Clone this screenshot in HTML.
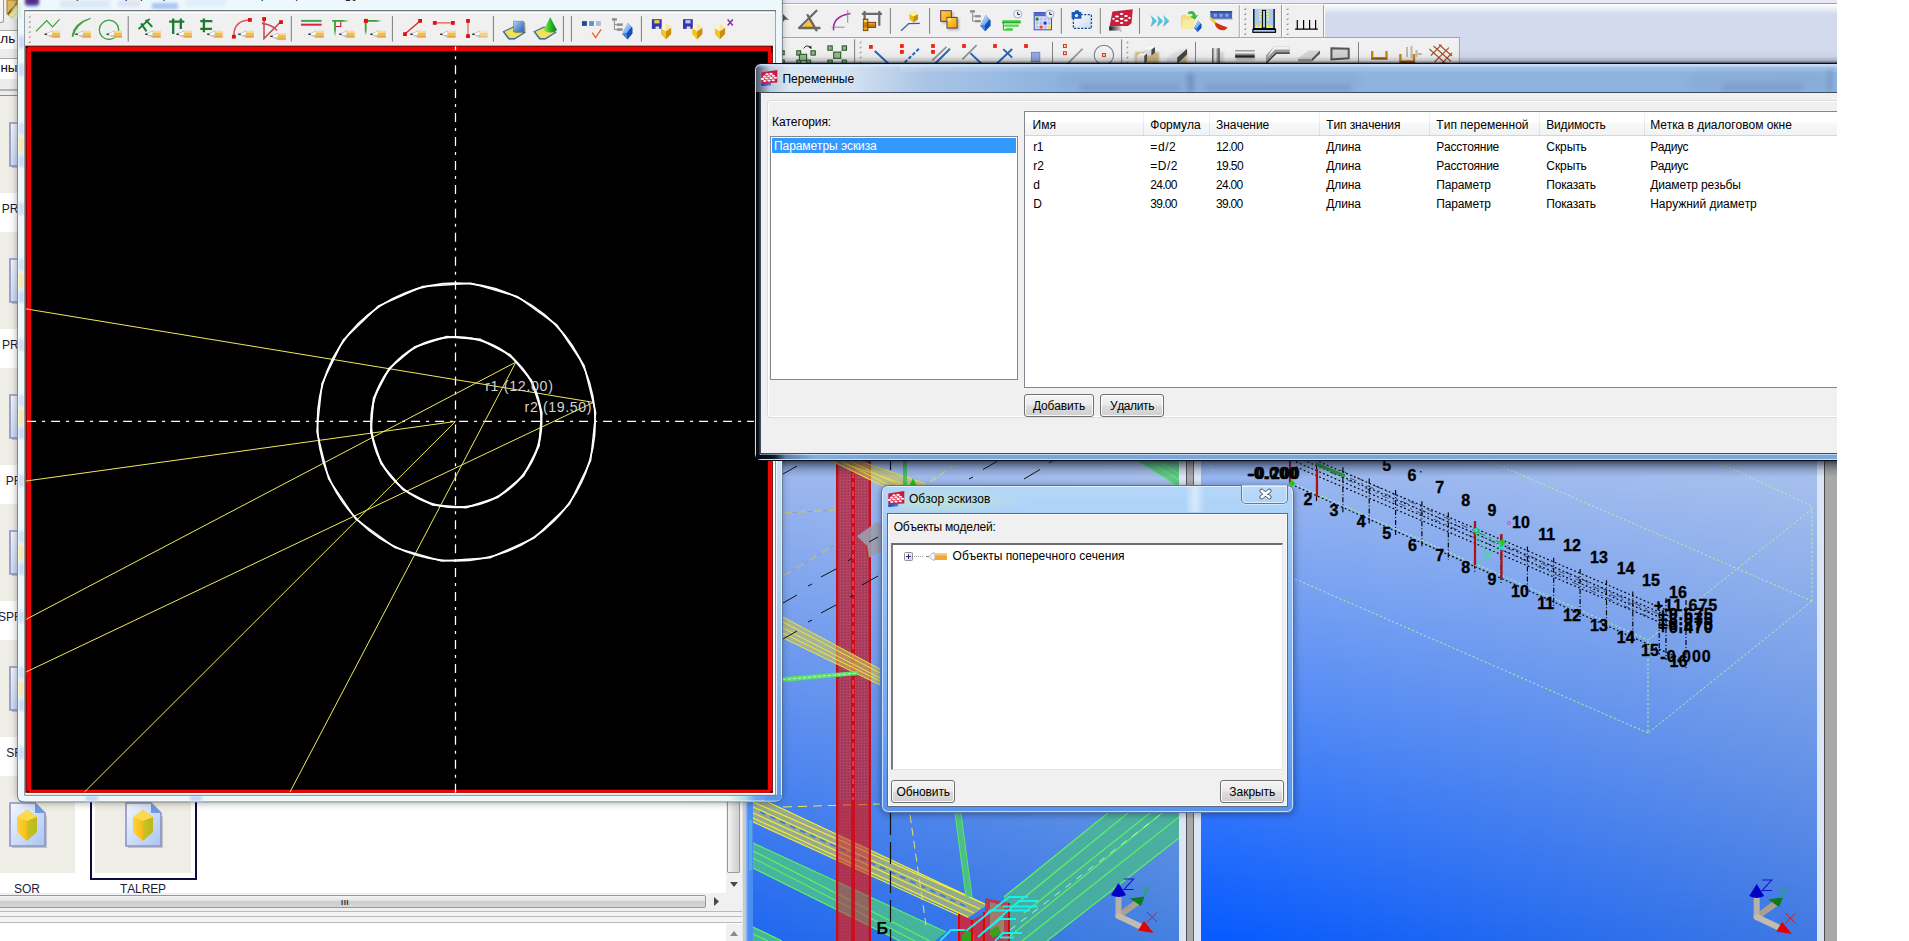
<!DOCTYPE html>
<html lang="ru"><head><meta charset="utf-8"><title>Tekla Structures</title>
<style>
html,body{margin:0;padding:0}
body{width:1909px;height:941px;position:relative;overflow:hidden;background:#fff;font-family:"Liberation Sans",sans-serif;font-size:12px;color:#000}
.a{position:absolute;display:block}
.t{position:absolute;white-space:pre;font-kerning:none;line-height:normal}
#stage{position:absolute;left:0;top:0;width:1837px;height:941px;overflow:hidden;background:#fff}
</style></head>
<body>
<div id="stage">
<div class="a" style="left:0px;top:0px;width:744px;height:941px;background:#fff"></div>
<div class="a" style="left:0px;top:0px;width:744px;height:96px;background:#ececec"></div>
<div class="a" style="left:0px;top:0px;width:3px;height:22px;background:#f6f6f6;border:1px solid #9a9a9a;border-left:none;border-top:none;border-radius:0 0 3px 0"></div>
<svg class="a" style="left:6px;top:0" width="12" height="20" viewBox="0 0 12 20"><path d="M1 0 H11 V12 L6 18 L1 14 Z" fill="#e3b85a" stroke="#a8802c" stroke-width="1"/><path d="M2 14 L11 3" stroke="#6b4c12" stroke-width="1.6"/><path d="M3 16 L11 7 V12 L6 18Z" fill="#f7e3a8"/></svg>
<div class="a" style="left:0px;top:30px;width:744px;height:1px;background:#a8a8a8"></div>
<div class="a" style="left:0px;top:31px;width:744px;height:18px;background:#fff"></div>
<div class="a" style="left:0px;top:58px;width:744px;height:1px;background:#a8a8a8"></div>
<div class="a" style="left:0px;top:59px;width:744px;height:20px;background:#fff"></div>
<div class="a" style="left:0px;top:89px;width:744px;height:2px;background:#b4b4b4"></div>
<div class="a" style="left:0px;top:95px;width:744px;height:1px;background:#8c8c8c"></div>
<span class="t" style="left:-43.0px;top:31.3px;font-size:13.5px;color:#111;">Профиль</span>
<span class="t" style="left:-39.0px;top:59.8px;font-size:13.5px;color:#111;">Основны</span>
<div class="a" style="left:-21px;top:96px;width:96px;height:97px;background:#efeee6"></div>
<div class="a" style="left:95px;top:96px;width:96px;height:97px;background:#efeee6"></div>
<svg class="a" style="left:9px;top:122px" width="40" height="48" viewBox="0 0 40 48">
<defs><linearGradient id="dg9" x1="0" y1="0" x2="1" y2="1"><stop offset="0" stop-color="#f4f8ff"/><stop offset="1" stop-color="#a9c4f2"/></linearGradient>
<linearGradient id="gg9" x1="0" y1="0" x2="1" y2="0"><stop offset="0" stop-color="#ffd23a"/><stop offset=".5" stop-color="#f3bd1c"/><stop offset=".5" stop-color="#c9c322"/><stop offset="1" stop-color="#b9b81e"/></linearGradient></defs>
<path d="M3 5 H27 L38 15 V46 H3 Z" fill="#8c8ca0" opacity=".45"/>
<path d="M1 1 H26 L36 11 V44 H1 Z" fill="url(#dg9)" stroke="#8f93c4" stroke-width="1.6"/>
<path d="M26 1 L36 11 H26 Z" fill="#6d9be6"/>
<path d="M18 8 L28 15 V30 L18 39 L8 30 V15 Z" fill="url(#gg9)"/>
<path d="M18 8 L28 15 L18 19 L8 15 Z" fill="#ffd94d"/>
</svg>
<svg class="a" style="left:125px;top:122px" width="40" height="48" viewBox="0 0 40 48">
<defs><linearGradient id="dg125" x1="0" y1="0" x2="1" y2="1"><stop offset="0" stop-color="#f4f8ff"/><stop offset="1" stop-color="#a9c4f2"/></linearGradient>
<linearGradient id="gg125" x1="0" y1="0" x2="1" y2="0"><stop offset="0" stop-color="#ffd23a"/><stop offset=".5" stop-color="#f3bd1c"/><stop offset=".5" stop-color="#c9c322"/><stop offset="1" stop-color="#b9b81e"/></linearGradient></defs>
<path d="M3 5 H27 L38 15 V46 H3 Z" fill="#8c8ca0" opacity=".45"/>
<path d="M1 1 H26 L36 11 V44 H1 Z" fill="url(#dg125)" stroke="#8f93c4" stroke-width="1.6"/>
<path d="M26 1 L36 11 H26 Z" fill="#6d9be6"/>
<path d="M18 8 L28 15 V30 L18 39 L8 30 V15 Z" fill="url(#gg125)"/>
<path d="M18 8 L28 15 L18 19 L8 15 Z" fill="#ffd94d"/>
</svg>
<div class="a" style="left:-21px;top:232px;width:96px;height:97px;background:#efeee6"></div>
<div class="a" style="left:95px;top:232px;width:96px;height:97px;background:#efeee6"></div>
<svg class="a" style="left:9px;top:258px" width="40" height="48" viewBox="0 0 40 48">
<defs><linearGradient id="dg9" x1="0" y1="0" x2="1" y2="1"><stop offset="0" stop-color="#f4f8ff"/><stop offset="1" stop-color="#a9c4f2"/></linearGradient>
<linearGradient id="gg9" x1="0" y1="0" x2="1" y2="0"><stop offset="0" stop-color="#ffd23a"/><stop offset=".5" stop-color="#f3bd1c"/><stop offset=".5" stop-color="#c9c322"/><stop offset="1" stop-color="#b9b81e"/></linearGradient></defs>
<path d="M3 5 H27 L38 15 V46 H3 Z" fill="#8c8ca0" opacity=".45"/>
<path d="M1 1 H26 L36 11 V44 H1 Z" fill="url(#dg9)" stroke="#8f93c4" stroke-width="1.6"/>
<path d="M26 1 L36 11 H26 Z" fill="#6d9be6"/>
<path d="M18 8 L28 15 V30 L18 39 L8 30 V15 Z" fill="url(#gg9)"/>
<path d="M18 8 L28 15 L18 19 L8 15 Z" fill="#ffd94d"/>
</svg>
<svg class="a" style="left:125px;top:258px" width="40" height="48" viewBox="0 0 40 48">
<defs><linearGradient id="dg125" x1="0" y1="0" x2="1" y2="1"><stop offset="0" stop-color="#f4f8ff"/><stop offset="1" stop-color="#a9c4f2"/></linearGradient>
<linearGradient id="gg125" x1="0" y1="0" x2="1" y2="0"><stop offset="0" stop-color="#ffd23a"/><stop offset=".5" stop-color="#f3bd1c"/><stop offset=".5" stop-color="#c9c322"/><stop offset="1" stop-color="#b9b81e"/></linearGradient></defs>
<path d="M3 5 H27 L38 15 V46 H3 Z" fill="#8c8ca0" opacity=".45"/>
<path d="M1 1 H26 L36 11 V44 H1 Z" fill="url(#dg125)" stroke="#8f93c4" stroke-width="1.6"/>
<path d="M26 1 L36 11 H26 Z" fill="#6d9be6"/>
<path d="M18 8 L28 15 V30 L18 39 L8 30 V15 Z" fill="url(#gg125)"/>
<path d="M18 8 L28 15 L18 19 L8 15 Z" fill="#ffd94d"/>
</svg>
<div class="a" style="left:-21px;top:368px;width:96px;height:97px;background:#efeee6"></div>
<div class="a" style="left:95px;top:368px;width:96px;height:97px;background:#efeee6"></div>
<svg class="a" style="left:9px;top:394px" width="40" height="48" viewBox="0 0 40 48">
<defs><linearGradient id="dg9" x1="0" y1="0" x2="1" y2="1"><stop offset="0" stop-color="#f4f8ff"/><stop offset="1" stop-color="#a9c4f2"/></linearGradient>
<linearGradient id="gg9" x1="0" y1="0" x2="1" y2="0"><stop offset="0" stop-color="#ffd23a"/><stop offset=".5" stop-color="#f3bd1c"/><stop offset=".5" stop-color="#c9c322"/><stop offset="1" stop-color="#b9b81e"/></linearGradient></defs>
<path d="M3 5 H27 L38 15 V46 H3 Z" fill="#8c8ca0" opacity=".45"/>
<path d="M1 1 H26 L36 11 V44 H1 Z" fill="url(#dg9)" stroke="#8f93c4" stroke-width="1.6"/>
<path d="M26 1 L36 11 H26 Z" fill="#6d9be6"/>
<path d="M18 8 L28 15 V30 L18 39 L8 30 V15 Z" fill="url(#gg9)"/>
<path d="M18 8 L28 15 L18 19 L8 15 Z" fill="#ffd94d"/>
</svg>
<svg class="a" style="left:125px;top:394px" width="40" height="48" viewBox="0 0 40 48">
<defs><linearGradient id="dg125" x1="0" y1="0" x2="1" y2="1"><stop offset="0" stop-color="#f4f8ff"/><stop offset="1" stop-color="#a9c4f2"/></linearGradient>
<linearGradient id="gg125" x1="0" y1="0" x2="1" y2="0"><stop offset="0" stop-color="#ffd23a"/><stop offset=".5" stop-color="#f3bd1c"/><stop offset=".5" stop-color="#c9c322"/><stop offset="1" stop-color="#b9b81e"/></linearGradient></defs>
<path d="M3 5 H27 L38 15 V46 H3 Z" fill="#8c8ca0" opacity=".45"/>
<path d="M1 1 H26 L36 11 V44 H1 Z" fill="url(#dg125)" stroke="#8f93c4" stroke-width="1.6"/>
<path d="M26 1 L36 11 H26 Z" fill="#6d9be6"/>
<path d="M18 8 L28 15 V30 L18 39 L8 30 V15 Z" fill="url(#gg125)"/>
<path d="M18 8 L28 15 L18 19 L8 15 Z" fill="#ffd94d"/>
</svg>
<div class="a" style="left:-21px;top:504px;width:96px;height:97px;background:#efeee6"></div>
<div class="a" style="left:95px;top:504px;width:96px;height:97px;background:#efeee6"></div>
<svg class="a" style="left:9px;top:530px" width="40" height="48" viewBox="0 0 40 48">
<defs><linearGradient id="dg9" x1="0" y1="0" x2="1" y2="1"><stop offset="0" stop-color="#f4f8ff"/><stop offset="1" stop-color="#a9c4f2"/></linearGradient>
<linearGradient id="gg9" x1="0" y1="0" x2="1" y2="0"><stop offset="0" stop-color="#ffd23a"/><stop offset=".5" stop-color="#f3bd1c"/><stop offset=".5" stop-color="#c9c322"/><stop offset="1" stop-color="#b9b81e"/></linearGradient></defs>
<path d="M3 5 H27 L38 15 V46 H3 Z" fill="#8c8ca0" opacity=".45"/>
<path d="M1 1 H26 L36 11 V44 H1 Z" fill="url(#dg9)" stroke="#8f93c4" stroke-width="1.6"/>
<path d="M26 1 L36 11 H26 Z" fill="#6d9be6"/>
<path d="M18 8 L28 15 V30 L18 39 L8 30 V15 Z" fill="url(#gg9)"/>
<path d="M18 8 L28 15 L18 19 L8 15 Z" fill="#ffd94d"/>
</svg>
<svg class="a" style="left:125px;top:530px" width="40" height="48" viewBox="0 0 40 48">
<defs><linearGradient id="dg125" x1="0" y1="0" x2="1" y2="1"><stop offset="0" stop-color="#f4f8ff"/><stop offset="1" stop-color="#a9c4f2"/></linearGradient>
<linearGradient id="gg125" x1="0" y1="0" x2="1" y2="0"><stop offset="0" stop-color="#ffd23a"/><stop offset=".5" stop-color="#f3bd1c"/><stop offset=".5" stop-color="#c9c322"/><stop offset="1" stop-color="#b9b81e"/></linearGradient></defs>
<path d="M3 5 H27 L38 15 V46 H3 Z" fill="#8c8ca0" opacity=".45"/>
<path d="M1 1 H26 L36 11 V44 H1 Z" fill="url(#dg125)" stroke="#8f93c4" stroke-width="1.6"/>
<path d="M26 1 L36 11 H26 Z" fill="#6d9be6"/>
<path d="M18 8 L28 15 V30 L18 39 L8 30 V15 Z" fill="url(#gg125)"/>
<path d="M18 8 L28 15 L18 19 L8 15 Z" fill="#ffd94d"/>
</svg>
<div class="a" style="left:-21px;top:640px;width:96px;height:97px;background:#efeee6"></div>
<div class="a" style="left:95px;top:640px;width:96px;height:97px;background:#efeee6"></div>
<svg class="a" style="left:9px;top:666px" width="40" height="48" viewBox="0 0 40 48">
<defs><linearGradient id="dg9" x1="0" y1="0" x2="1" y2="1"><stop offset="0" stop-color="#f4f8ff"/><stop offset="1" stop-color="#a9c4f2"/></linearGradient>
<linearGradient id="gg9" x1="0" y1="0" x2="1" y2="0"><stop offset="0" stop-color="#ffd23a"/><stop offset=".5" stop-color="#f3bd1c"/><stop offset=".5" stop-color="#c9c322"/><stop offset="1" stop-color="#b9b81e"/></linearGradient></defs>
<path d="M3 5 H27 L38 15 V46 H3 Z" fill="#8c8ca0" opacity=".45"/>
<path d="M1 1 H26 L36 11 V44 H1 Z" fill="url(#dg9)" stroke="#8f93c4" stroke-width="1.6"/>
<path d="M26 1 L36 11 H26 Z" fill="#6d9be6"/>
<path d="M18 8 L28 15 V30 L18 39 L8 30 V15 Z" fill="url(#gg9)"/>
<path d="M18 8 L28 15 L18 19 L8 15 Z" fill="#ffd94d"/>
</svg>
<svg class="a" style="left:125px;top:666px" width="40" height="48" viewBox="0 0 40 48">
<defs><linearGradient id="dg125" x1="0" y1="0" x2="1" y2="1"><stop offset="0" stop-color="#f4f8ff"/><stop offset="1" stop-color="#a9c4f2"/></linearGradient>
<linearGradient id="gg125" x1="0" y1="0" x2="1" y2="0"><stop offset="0" stop-color="#ffd23a"/><stop offset=".5" stop-color="#f3bd1c"/><stop offset=".5" stop-color="#c9c322"/><stop offset="1" stop-color="#b9b81e"/></linearGradient></defs>
<path d="M3 5 H27 L38 15 V46 H3 Z" fill="#8c8ca0" opacity=".45"/>
<path d="M1 1 H26 L36 11 V44 H1 Z" fill="url(#dg125)" stroke="#8f93c4" stroke-width="1.6"/>
<path d="M26 1 L36 11 H26 Z" fill="#6d9be6"/>
<path d="M18 8 L28 15 V30 L18 39 L8 30 V15 Z" fill="url(#gg125)"/>
<path d="M18 8 L28 15 L18 19 L8 15 Z" fill="#ffd94d"/>
</svg>
<div class="a" style="left:-21px;top:776px;width:96px;height:97px;background:#efeee6"></div>
<div class="a" style="left:95px;top:776px;width:96px;height:97px;background:#efeee6"></div>
<svg class="a" style="left:9px;top:802px" width="40" height="48" viewBox="0 0 40 48">
<defs><linearGradient id="dg9" x1="0" y1="0" x2="1" y2="1"><stop offset="0" stop-color="#f4f8ff"/><stop offset="1" stop-color="#a9c4f2"/></linearGradient>
<linearGradient id="gg9" x1="0" y1="0" x2="1" y2="0"><stop offset="0" stop-color="#ffd23a"/><stop offset=".5" stop-color="#f3bd1c"/><stop offset=".5" stop-color="#c9c322"/><stop offset="1" stop-color="#b9b81e"/></linearGradient></defs>
<path d="M3 5 H27 L38 15 V46 H3 Z" fill="#8c8ca0" opacity=".45"/>
<path d="M1 1 H26 L36 11 V44 H1 Z" fill="url(#dg9)" stroke="#8f93c4" stroke-width="1.6"/>
<path d="M26 1 L36 11 H26 Z" fill="#6d9be6"/>
<path d="M18 8 L28 15 V30 L18 39 L8 30 V15 Z" fill="url(#gg9)"/>
<path d="M18 8 L28 15 L18 19 L8 15 Z" fill="#ffd94d"/>
</svg>
<svg class="a" style="left:125px;top:802px" width="40" height="48" viewBox="0 0 40 48">
<defs><linearGradient id="dg125" x1="0" y1="0" x2="1" y2="1"><stop offset="0" stop-color="#f4f8ff"/><stop offset="1" stop-color="#a9c4f2"/></linearGradient>
<linearGradient id="gg125" x1="0" y1="0" x2="1" y2="0"><stop offset="0" stop-color="#ffd23a"/><stop offset=".5" stop-color="#f3bd1c"/><stop offset=".5" stop-color="#c9c322"/><stop offset="1" stop-color="#b9b81e"/></linearGradient></defs>
<path d="M3 5 H27 L38 15 V46 H3 Z" fill="#8c8ca0" opacity=".45"/>
<path d="M1 1 H26 L36 11 V44 H1 Z" fill="url(#dg125)" stroke="#8f93c4" stroke-width="1.6"/>
<path d="M26 1 L36 11 H26 Z" fill="#6d9be6"/>
<path d="M18 8 L28 15 V30 L18 39 L8 30 V15 Z" fill="url(#gg125)"/>
<path d="M18 8 L28 15 L18 19 L8 15 Z" fill="#ffd94d"/>
</svg>
<div class="a" style="left:90px;top:769px;width:103px;height:107px;border:2px solid #0c0c3e;background:transparent"></div>
<span class="t" style="left:1.8px;top:201.9px;font-size:12px;color:#1a1a3a;">PROFILE</span>
<span class="t" style="left:1.9px;top:337.9px;font-size:12px;color:#1a1a3a;">PROFIL</span>
<span class="t" style="left:5.8px;top:473.9px;font-size:12px;color:#1a1a3a;">PRFLS</span>
<span class="t" style="left:-2.0px;top:609.9px;font-size:12px;color:#1a1a3a;">SPRFL</span>
<span class="t" style="left:6.2px;top:745.9px;font-size:12px;color:#1a1a3a;">SRFL</span>
<span class="t" style="left:14.0px;top:881.6px;font-size:12px;letter-spacing:-0.005px;color:#1a1a3a;">SQR</span>
<span class="t" style="left:120.0px;top:881.6px;font-size:12px;letter-spacing:-0.115px;color:#1a1a3a;">TALREP</span>
<div class="a" style="left:726px;top:96px;width:16px;height:797px;background:#f0f0f0"></div>
<div class="a" style="left:727px;top:96px;width:13px;height:777px;background:linear-gradient(90deg,#f3f3f3,#dcdcdc 60%,#cfcfcf);border:1px solid #989898;border-top:none;border-radius:0 0 2px 2px;box-sizing:border-box"></div>
<svg class="a" style="left:730px;top:882px" width="8" height="5"><path d="M0 0H8L4 5Z" fill="#4a4a4a"/></svg>
<div class="a" style="left:0px;top:893px;width:744px;height:18px;background:#f0f0f0"></div>
<div class="a" style="left:-4px;top:895px;width:710px;height:13px;background:linear-gradient(#f5f5f5,#e2e2e2 45%,#cdcdcd 50%,#d6d6d6);border:1px solid #989898;border-radius:2px;box-sizing:border-box"></div>
<span class="t" style="left:341.0px;top:897.8px;font-size:8px;letter-spacing:0.443px;color:#333;font-weight:700;">III</span>
<svg class="a" style="left:714px;top:897px" width="5" height="9"><path d="M0 0V9L5 4.5Z" fill="#4a4a4a"/></svg>
<div class="a" style="left:0px;top:911px;width:744px;height:1px;background:#b9b9b9"></div>
<div class="a" style="left:0px;top:912px;width:744px;height:4px;background:#f4f4f4"></div>
<div class="a" style="left:0px;top:916px;width:744px;height:1px;background:#b9b9b9"></div>
<div class="a" style="left:0px;top:917px;width:744px;height:5px;background:#f4f4f4"></div>
<div class="a" style="left:0px;top:922px;width:744px;height:1px;background:#b9b9b9"></div>
<div class="a" style="left:0px;top:923px;width:744px;height:18px;background:#fff"></div>
<div class="a" style="left:726px;top:924px;width:16px;height:17px;background:#f0f0f0"></div>
<svg class="a" style="left:730px;top:931px" width="8" height="5"><path d="M0 5H8L4 0Z" fill="#8a8a8a"/></svg>
<div class="a" style="left:742px;top:0px;width:1px;height:941px;background:#e6e6e6"></div>
<div class="a" style="left:743px;top:0px;width:3px;height:941px;background:#c9c9c9"></div>
<svg class="a" style="left:746px;top:0px" width="1091" height="64" viewBox="746 0 1091 64"><defs>
<linearGradient id="mbcl" x1="0" y1="0" x2="1" y2="1"><stop offset="0" stop-color="#fff"/><stop offset=".6" stop-color="#7db0ee"/><stop offset="1" stop-color="#2a6fd8"/></linearGradient>
<linearGradient id="lavT" x1="0" y1="0" x2="0" y2="1"><stop offset="0" stop-color="#ffffff"/><stop offset="1" stop-color="#d3daee"/></linearGradient>
<linearGradient id="org" x1="0" y1="0" x2="1" y2="1"><stop offset="0" stop-color="#ffd83a"/><stop offset="1" stop-color="#f59a10"/></linearGradient>
<linearGradient id="cylH" x1="0" x2="1"><stop offset="0" stop-color="#4a4a4a"/><stop offset=".4" stop-color="#f4f4f4"/><stop offset="1" stop-color="#3c3c3c"/></linearGradient>
<linearGradient id="cylV" x1="0" x2="0" y1="0" y2="1"><stop offset="0" stop-color="#8a8a8a"/><stop offset=".35" stop-color="#f6f6f6"/><stop offset=".8" stop-color="#2a2a2a"/><stop offset="1" stop-color="#111"/></linearGradient>
<linearGradient id="boxT" x1="0" x2="1" y1="0" y2="1"><stop offset="0" stop-color="#ffffff"/><stop offset="1" stop-color="#c4c4c4"/></linearGradient>
<linearGradient id="tkg" x1="0" x2="1"><stop offset="0" stop-color="#111"/><stop offset="1" stop-color="#d0d0d0"/></linearGradient>
<linearGradient id="snapg" x1="0" x2="1" y1="0" y2="1"><stop offset="0" stop-color="#ffffff"/><stop offset="1" stop-color="#c6d8f2"/></linearGradient>
<filter id="mb1" x="-30%" y="-30%" width="160%" height="160%"><feGaussianBlur stdDeviation="1.2"/></filter>
</defs><rect x="746" y="0" width="1091" height="64" fill="#d3daee"/><rect x="746" y="0" width="1091" height="3.2" fill="#e6e9f4"/><rect x="746" y="3" width="1091" height=".9" fill="#8c8e98"/><rect x="746" y="3.9" width="1091" height="10.5" fill="url(#lavT)"/><rect x="782" y="3.9" width="541.6" height="33.4" fill="#f0f0f0"/><rect x="782" y="3.9" width="541.6" height="1.2" fill="#fafafa"/><rect x="782" y="37.3" width="678" height="1" fill="#8e8e8e"/><rect x="782" y="38.3" width="677.1" height="26" fill="#f0f0f0"/><rect x="782" y="38.3" width="677.1" height="1" fill="#fbfbfb"/><rect x="1458.9" y="38.3" width="1" height="25.700000000000003" fill="#a4a4a4"/><rect x="1238.8" y="5" width="1" height="32.3" fill="#9a9a9a"/><rect x="1239.8" y="5" width="1" height="32.3" fill="#fdfdfd"/><rect x="1281.0" y="5" width="1" height="32.3" fill="#9a9a9a"/><rect x="1282.0" y="5" width="1" height="32.3" fill="#fdfdfd"/><rect x="1323.1" y="5" width="1" height="32.3" fill="#9a9a9a"/><rect x="1324.1" y="5" width="1" height="32.3" fill="#fdfdfd"/><path d="M783 14 L789 20 L785 19.5 L783 22Z" fill="#5a5a5a"/><rect x="889.9" y="8" width="1" height="25.799999999999997" fill="#808080"/><rect x="929.1" y="8" width="1" height="25.799999999999997" fill="#808080"/><rect x="1060.8" y="8" width="1" height="25.799999999999997" fill="#808080"/><rect x="1099.8" y="8" width="1" height="25.799999999999997" fill="#808080"/><rect x="1139.0" y="8" width="1" height="25.799999999999997" fill="#808080"/><path d="M802.3 26.9 L810.7 18.8 L814.9 26.9Z" fill="url(#org)"/><path d="M804.5 26.9 L810.7 21 L813 26.9Z" fill="#ffd23a" opacity=".6"/><path d="M799.1 28 L816.5 10.7 M799.1 28 H819.6 M807.6 15.1 L816.5 30.3" stroke="#6c6862" stroke-width="2.3" fill="none" stroke-linecap="round"/><path d="M833.6 30.3 Q832 16.5 850.3 13.4" fill="none" stroke="#9a28a0" stroke-width="1.5"/><path d="M847.7 10.2 V22.7 M831.6 27.2 H844.6 M848.5 13.4 H851" stroke="#8c8c98" stroke-width="1" fill="none"/><path d="M861.9 13.8 H882 M864.6 11.1 V19.1 M879.3 11.1 V25.8" stroke="#6a6a6a" stroke-width="2.2" fill="none"/><rect x="863.3" y="19.1" width="4.6" height="11.6" fill="#c87a0a" stroke="#6a3200" stroke-width=".8"/><rect x="867.9" y="22.3" width="7.8" height="5.3" fill="#c8780c" stroke="#6a3200" stroke-width=".8"/><rect x="863.8" y="20" width="3.4" height="2.2" fill="#f8d040"/><rect x="863.8" y="27.6" width="3.4" height="2.2" fill="#e8a820"/><rect x="868.5" y="23" width="6.4" height="1.5" fill="#e8a030"/><path d="M901.1 30.7 L908.7 23.6 L919.8 23.3" fill="none" stroke="#2c5cc0" stroke-width="1.3"/><path d="M913.6 11.1 L918 14.2 V19.2 L913.6 22.6 L909.4 19.2 V14.2Z" fill="#f0b818"/><path d="M913.6 11.1 L918 14.2 L913.6 16.6 L909.4 14.2Z" fill="#fdf0a0"/><path d="M913.6 16.6 L918 14.2 V19.2 L913.6 22.6Z" fill="#c8900a"/><rect x="942" y="12" width="11.6" height="11.6" fill="#555" opacity=".35" filter="url(#mb1)"/><rect x="948" y="18.5" width="11.2" height="11.6" fill="#555" opacity=".4" filter="url(#mb1)"/><rect x="940.7" y="10.7" width="10.6" height="10.6" fill="url(#org)" stroke="#5a3a50" stroke-width="1"/><rect x="947" y="17.4" width="10.1" height="10.6" fill="url(#org)" stroke="#5a3a50" stroke-width="1"/><rect x="947.5" y="17.9" width="3.6" height="3.2" fill="#ffe070"/><path d="M972.6 12.5 V21.2 H975 M972.6 16.2 H975" fill="none" stroke="#8c8c8c" stroke-width="1"/><rect x="970" y="10.2" width="5" height="2.4" fill="#8c8c8c"/><rect x="975" y="15.1" width="5.8" height="2.3" fill="#8c8c8c"/><rect x="975" y="20" width="5.8" height="2.3" fill="#8c8c8c"/><g transform="translate(985.7,15.1) scale(1.0)"><path d="M0 0 L4.9 5.4 V10.7 L-.5 16.1 L-5.4 10.7 Z" fill="#1450b4"/><path d="M0 0 L4 4.2 L-1 10.4 L-5.4 10.7 Z" fill="url(#mbcl)"/><path d="M-5.4 10.7 L-1 10.4 L-.5 16.1Z" fill="#3f86e4"/></g><path d="M1003.4 22 V30 H1006 M1003.4 26 H1004" stroke="#2aa82a" stroke-width="1" fill="none"/><rect x="1002.1" y="20.3" width="18.7" height="2.8" rx="1" fill="#3ccc3c"/><rect x="1004" y="24.4" width="15" height="2.4" rx="1" fill="#4adc4a"/><rect x="1005.4" y="28.2" width="7.6" height="2.5" rx="1" fill="#3ccc3c"/><rect x="1002.1" y="22.5" width="18.7" height=".8" fill="#1e8a1e"/><circle cx="1017.7" cy="14.2" r="4" fill="#eef1f8" stroke="#a4acc4" stroke-width="1"/><path d="M1017.7 11.799999999999999 V14.5 H1019.9000000000001" fill="none" stroke="#223" stroke-width="1"/><rect x="1034.2" y="12.5" width="17.3" height="17.3" fill="#e6ebf8" stroke="#3a4cb0" stroke-width="1"/><rect x="1034.2" y="12.5" width="17.3" height="3.8" fill="#5068d0"/><rect x="1035.6" y="17.6" width="3" height="3" fill="#2a7a2a"/><rect x="1039.6" y="17.6" width="3" height="3" fill="#b4c2ec"/><rect x="1043.6" y="17.6" width="3" height="3" fill="#b4c2ec"/><rect x="1047.6" y="17.6" width="3" height="3" fill="#b4c2ec"/><rect x="1035.6" y="21.6" width="3" height="3" fill="#b4c2ec"/><rect x="1039.6" y="21.6" width="3" height="3" fill="#b4c2ec"/><rect x="1043.6" y="21.6" width="3" height="3" fill="#2a2ae0"/><rect x="1047.6" y="21.6" width="3" height="3" fill="#b4c2ec"/><rect x="1035.6" y="25.6" width="3" height="3" fill="#b4c2ec"/><rect x="1039.6" y="25.6" width="3" height="3" fill="#e84040"/><rect x="1043.6" y="25.6" width="3" height="3" fill="#b4c2ec"/><rect x="1047.6" y="25.6" width="3" height="3" fill="#f0e030"/><circle cx="1049.8" cy="14.2" r="4" fill="#eef1f8" stroke="#a4acc4" stroke-width="1"/><path d="M1049.8 11.799999999999999 V14.5 H1052.0" fill="none" stroke="#223" stroke-width="1"/><rect x="1073.4" y="14.7" width="18" height="13.6" fill="url(#snapg)" stroke="#1a4a90" stroke-width="1.3" stroke-dasharray="2.2 1.4"/><path d="M1071.6 12 H1074.5 L1075.5 10.2 H1078.5 L1079.5 12 H1081.4 V18.7 H1071.6Z" fill="#1a5ab8"/><circle cx="1076.5" cy="15.6" r="1.7" fill="#e8f2ff"/><path d="M1112.4 11.6 L1132.8 9.3 L1131.5 23.2 L1128 25.9 L1109.7 25.9Z" fill="#c8203c"/><rect x="1109.2" y="26.2" width="11.6" height="4.4" fill="url(#tkg)"/><path d="M1119 30 H1121.3 V32.2Z" fill="#aaa"/><g fill="#fff"><ellipse cx="1121.7" cy="18.8" rx="2" ry="1.1"/><ellipse cx="1117" cy="16.4" rx="1.9" ry="1"/><ellipse cx="1126" cy="16" rx="1.9" ry="1"/><ellipse cx="1121.6" cy="14" rx="1.7" ry=".9"/><ellipse cx="1117" cy="21" rx="1.9" ry="1"/><ellipse cx="1126" cy="20.6" rx="1.9" ry="1"/><ellipse cx="1121.6" cy="23" rx="1.7" ry=".9"/><ellipse cx="1113.5" cy="18.8" rx="1.4" ry=".9"/><ellipse cx="1129.5" cy="18" rx="1.3" ry=".9"/></g><path d="M1150.7 15.1 L1156.5 20.5 L1150.7 25.9 L1152.4 20.5Z" fill="#4ec4e0"/><path d="M1150.7 25.9 L1156.5 20.5 L1156.5 21.6 L1151.3 26.6Z" fill="#2a8ca6" opacity=".8"/><path d="M1156.9 15.1 L1162.7 20.5 L1156.9 25.9 L1158.6000000000001 20.5Z" fill="#4ec4e0"/><path d="M1156.9 25.9 L1162.7 20.5 L1162.7 21.6 L1157.5 26.6Z" fill="#2a8ca6" opacity=".8"/><path d="M1163.1 15.1 L1168.8999999999999 20.5 L1163.1 25.9 L1164.8 20.5Z" fill="#4ec4e0"/><path d="M1163.1 25.9 L1168.8999999999999 20.5 L1168.8999999999999 21.6 L1163.6999999999998 26.6Z" fill="#2a8ca6" opacity=".8"/><path d="M1181 15.4 L1185.5 14.2 L1187.5 16 H1192.5 V28.9 H1181Z" fill="#f2dc80"/><path d="M1181 28.9 L1183.3 19.4 H1195.2 L1193 28.9Z" fill="#f9ec9e"/><path d="M1187.6 12.6 Q1193.5 8.6 1196 15.4 L1198.3 14.8 L1194.8 19.8 L1190.2 16.6 L1192.8 16.1 Q1191.6 12.4 1188.6 14.4Z" fill="#3cbc3c"/><g transform="translate(1198.0,20.4) scale(0.72)"><path d="M0 0 L4.9 5.4 V10.7 L-.5 16.1 L-5.4 10.7 Z" fill="#1450b4"/><path d="M0 0 L4 4.2 L-1 10.4 L-5.4 10.7 Z" fill="url(#mbcl)"/><path d="M-5.4 10.7 L-1 10.4 L-.5 16.1Z" fill="#3f86e4"/></g><rect x="1210.3" y="11.1" width="21.8" height="8" fill="#3a6ac0"/><rect x="1210.3" y="11.1" width="21.8" height="1.4" fill="#2a4a98"/><rect x="1211" y="18.2" width="21.8" height="1.4" fill="#9ab" opacity=".7"/><rect x="1213.6" y="13.8" width="3.3" height="3" fill="#9898e8"/><rect x="1219.4" y="13.8" width="3.3" height="3" fill="#9898e8"/><rect x="1225.2" y="13.8" width="3.3" height="3" fill="#9898e8"/><path d="M1210.3 16.4 L1217 22.8 L1215.4 25 L1209.8 19Z" fill="#f0cc30"/><path d="M1215.4 22.6 Q1221 25.5 1227.8 27.6 Q1224 32.5 1217.6 28.4 Q1214.4 26 1215.4 22.6Z" fill="#d43018"/><path d="M1243.8 9.9 l2.3 -2.1 v2.1z" fill="#969696"/><path d="M1243.8 14.9 l2.3 -2.1 v2.1z" fill="#969696"/><path d="M1243.8 19.9 l2.3 -2.1 v2.1z" fill="#969696"/><path d="M1243.8 24.9 l2.3 -2.1 v2.1z" fill="#969696"/><path d="M1243.8 29.9 l2.3 -2.1 v2.1z" fill="#969696"/><path d="M1243.8 34.9 l2.3 -2.1 v2.1z" fill="#969696"/><path d="M1286.1 9.9 l2.3 -2.1 v2.1z" fill="#969696"/><path d="M1286.1 14.9 l2.3 -2.1 v2.1z" fill="#969696"/><path d="M1286.1 19.9 l2.3 -2.1 v2.1z" fill="#969696"/><path d="M1286.1 24.9 l2.3 -2.1 v2.1z" fill="#969696"/><path d="M1286.1 29.9 l2.3 -2.1 v2.1z" fill="#969696"/><path d="M1286.1 34.9 l2.3 -2.1 v2.1z" fill="#969696"/><rect x="1253.3" y="8.9" width="21.3" height="20.5" fill="#a9c9f0"/><path d="M1254.5 29 L1257 24.5 L1258.3 27.6 L1261.5 22 V29Z M1273.4 29 L1271 24.5 L1269.7 27.6 L1266.5 22 V29Z" fill="#ffee20"/><g fill="#fff06a"><rect x="1259" y="10.6" width="2.6" height="1.6"/><rect x="1259" y="13.4" width="2.6" height="1.6"/><rect x="1259" y="16.2" width="2.6" height="1.6"/><rect x="1259" y="19" width="2.6" height="1.6"/><rect x="1266.3" y="10.6" width="2.6" height="1.6"/><rect x="1266.3" y="13.4" width="2.6" height="1.6"/><rect x="1266.3" y="16.2" width="2.6" height="1.6"/><rect x="1266.3" y="19" width="2.6" height="1.6"/></g><path d="M1253.8 8.9 V29.4 M1274.1 8.9 V29.4" stroke="#000" stroke-width="1.3"/><rect x="1262.4" y="10.4" width="3.2" height="17.6" fill="#a9c9f0" stroke="#000" stroke-width="1"/><rect x="1252.9" y="29.4" width="22.6" height="2.9" fill="#a9c9f0" stroke="#000" stroke-width="1.2"/><rect x="1253" y="28" width="22.4" height="1.6" fill="#000"/><path d="M1295.1 29.2 H1317.8 M1297.3 20 V29.2 M1303.6 20 V29.2 M1309.6 20 V29.2 M1315.6 20 V29.2" stroke="#000" stroke-width="1.2" fill="none"/><g clip-path="url(#r2c)"><defs><clipPath id="r2c"><rect x="782" y="38.3" width="680" height="25.7"/></clipPath></defs><rect x="854.1" y="39.3" width="1" height="24.700000000000003" fill="#808080"/><rect x="1121.1" y="39.3" width="1" height="24.700000000000003" fill="#808080"/><rect x="1052.0" y="42" width="1" height="22" fill="#808080"/><rect x="1195.0" y="42" width="1" height="22" fill="#808080"/><rect x="1358.0" y="42.3" width="1" height="21.700000000000003" fill="#808080"/><path d="M859.1 43.2 l2.3 -2.1 v2.1z" fill="#969696"/><path d="M859.1 48.2 l2.3 -2.1 v2.1z" fill="#969696"/><path d="M859.1 53.2 l2.3 -2.1 v2.1z" fill="#969696"/><path d="M859.1 58.2 l2.3 -2.1 v2.1z" fill="#969696"/><path d="M859.1 63.2 l2.3 -2.1 v2.1z" fill="#969696"/><path d="M859.1 68.2 l2.3 -2.1 v2.1z" fill="#969696"/><path d="M1125.9 43.2 l2.3 -2.1 v2.1z" fill="#969696"/><path d="M1125.9 48.2 l2.3 -2.1 v2.1z" fill="#969696"/><path d="M1125.9 53.2 l2.3 -2.1 v2.1z" fill="#969696"/><path d="M1125.9 58.2 l2.3 -2.1 v2.1z" fill="#969696"/><path d="M1125.9 63.2 l2.3 -2.1 v2.1z" fill="#969696"/><path d="M1125.9 68.2 l2.3 -2.1 v2.1z" fill="#969696"/><rect x="779.8" y="50.8" width="4.4" height="3.9" fill="#90ba8b" stroke="#2c5a2c" stroke-width="1.1"/><rect x="779.8" y="60.1" width="4.4" height="4.1" fill="#90ba8b" stroke="#2c5a2c" stroke-width="1.1"/><rect x="796.8" y="50.8" width="3.9" height="4.3" fill="#90ba8b" stroke="#2c5a2c" stroke-width="1.1"/><rect x="811.0" y="50.8" width="4.3" height="4.3" fill="#90ba8b" stroke="#2c5a2c" stroke-width="1.1"/><rect x="796.8" y="60.1" width="3.9" height="4.1" fill="#90ba8b" stroke="#2c5a2c" stroke-width="1.1"/><rect x="806.6" y="60.1" width="4.0" height="4.1" fill="#90ba8b" stroke="#2c5a2c" stroke-width="1.1"/><rect x="799.4" y="54.3" width="7.2" height="6.3" fill="#90ba8b" stroke="#2c5a2c" stroke-width="1.1"/><path d="M803.6 48.4 Q807 43.6 811 48" fill="none" stroke="#222" stroke-width="1"/><path d="M811.6 49 L808.6 47.6 L811.2 45.6Z" fill="#222"/><path d="M830 48 L844.4 62 M844.4 48 L830 62" stroke="#9abf98" stroke-width="1" stroke-dasharray="1.5 1.2"/><rect x="827.9" y="45.9" width="4.3" height="4.3" fill="#90ba8b" stroke="#2c5a2c" stroke-width="1.1"/><rect x="842.2" y="45.9" width="4.3" height="4.3" fill="#90ba8b" stroke="#2c5a2c" stroke-width="1.1"/><rect x="827.9" y="60.1" width="4.3" height="4.1" fill="#90ba8b" stroke="#2c5a2c" stroke-width="1.1"/><rect x="842.2" y="60.1" width="4.3" height="4.1" fill="#90ba8b" stroke="#2c5a2c" stroke-width="1.1"/><rect x="833.7" y="52.1" width="7.0" height="6.2" fill="#90ba8b" stroke="#2c5a2c" stroke-width="1.1"/><rect x="869" y="45" width="3.8" height="3.8" fill="#f02410"/><path d="M874.8 50.9 L888.5 63.7" stroke="#2068c0" stroke-width="2"/><rect x="900" y="44.1" width="3.8" height="3.8" fill="#f02410"/><rect x="900" y="50" width="3.8" height="3.8" fill="#f02410"/><path d="M918.9 48.7 L903.4 63.8" stroke="#2068c0" stroke-width="2" stroke-dasharray="3.6 1.8"/><rect x="931.1" y="44.1" width="3.8" height="3.8" fill="#f02410"/><rect x="931.1" y="50" width="3.8" height="3.8" fill="#f02410"/><path d="M946.5 46.9 L932.3 60.3" stroke="#8e8e8e" stroke-width="1.6"/><path d="M950 48.7 L935 63.8" stroke="#2068c0" stroke-width="2"/><rect x="962.1" y="44.1" width="3.8" height="3.8" fill="#f02410"/><path d="M976.6 45.1 L962.4 59.4" stroke="#8e8e8e" stroke-width="1.6"/><path d="M970.4 53.1 L981.4 63.7" stroke="#2068c0" stroke-width="2"/><rect x="993.1" y="44.1" width="3.8" height="3.8" fill="#f02410"/><path d="M1012.2 49.1 L996.6 63.8 M1003.3 49.1 L1012.2 57.6" stroke="#2068c0" stroke-width="2"/><rect x="1024.1" y="44.1" width="3.8" height="3.8" fill="#f02410"/><rect x="1031.4" y="52.3" width="8.4" height="9.3" fill="#94aae0" stroke="#6a82c4" stroke-width=".9"/><rect x="1063.5" y="44.6" width="2.8" height="2.8" fill="#fff" stroke="#d03a10" stroke-width="1.1"/><rect x="1063.5" y="51.8" width="2.8" height="2.8" fill="#fff" stroke="#d03a10" stroke-width="1.1"/><path d="M1082.6 48.7 L1067.4 63.8" stroke="#8e8e8e" stroke-width="1.6"/><circle cx="1103.9" cy="54.9" r="9.7" fill="none" stroke="#808080" stroke-width="1.1"/><rect x="1102.6" y="53.6" width="2.8" height="2.8" fill="#fff" stroke="#d03a10" stroke-width="1.1"/><rect x="1135" y="52" width="24" height="13" fill="#c2a058" opacity=".75" filter="url(#mb1)"/><path d="M1144.3 49.6 L1147.4 46.9 H1155 L1151.4 49.6Z" fill="#fafafa"/><rect x="1144.3" y="49.6" width="7.1" height="5.8" fill="#dcdcdc"/><path d="M1151.4 49.6 L1155 46.9 V52.7 L1151.4 55.4Z" fill="#4a4a4a"/><path d="M1136.7 55.8 L1139.8 53.6 H1147 L1144.3 55.8Z" fill="#fafafa"/><rect x="1136.7" y="55.8" width="7.6" height="8.5" fill="#dedede"/><path d="M1144.3 55.8 L1147 53.6 V61 L1144.3 64Z" fill="#4a4a4a"/><path d="M1178 64 L1187 50 V64Z" fill="#c2a058" opacity=".75" filter="url(#mb1)"/><path d="M1167 57.6 L1178.6 48.7 H1187 L1177.2 57.6Z" fill="url(#boxT)"/><rect x="1167" y="57.6" width="10.2" height="6.6" fill="#dedede"/><path d="M1177.2 57.6 L1187 48.7 V54.5 L1177.2 64Z" fill="#444"/><rect x="1219" y="52" width="4.5" height="12" fill="#bbb" opacity=".6" filter="url(#mb1)"/><rect x="1212" y="48.2" width="7.7" height="16" fill="url(#cylH)"/><rect x="1236" y="57" width="19" height="3.5" fill="#999" opacity=".6" filter="url(#mb1)"/><rect x="1235.1" y="50" width="19.6" height="7.6" fill="url(#cylV)"/><path d="M1266 55.5 L1273.8 46.7 H1289.7 V53.8 H1276.5 L1266 64Z" fill="#9c9c9c"/><path d="M1273.8 46.7 H1289.7 V49.5 H1275 L1266.8 58Z" fill="#f2f2f2"/><path d="M1276.5 53.8 H1289.7 V52.5 H1276 L1266 62.5 V64Z" fill="#333"/><path d="M1298 58.8 L1308.4 50.5 H1320 L1311.7 58.8Z" fill="#d4d4d4"/><rect x="1298" y="58.8" width="13.7" height="2.7" fill="#9a9a9a"/><path d="M1311.7 58.8 L1320 50.5 V53.8 L1311.7 61.5Z" fill="#555"/><path d="M1331.4 48.2 L1348.7 48.7 V58.2 L1331.4 59.4Z" fill="#d2d2d2" stroke="#555" stroke-width="2"/><path d="M1372.2 51 V58.2 H1386.5 V51" fill="none" stroke="#c88410" stroke-width="2.4"/><path d="M1371.5 58.9 H1387.2" stroke="#8c4c0a" stroke-width="1.4"/><path d="M1407 47 V57 M1411.5 46.1 V58 M1416.5 50 V57 M1418 54 H1421.7" stroke="#c0b8a8" stroke-width="2" fill="none"/><path d="M1400.4 54 V61.4 H1414 V54" fill="none" stroke="#c88410" stroke-width="2.4"/><path d="M1399.6 62.2 H1415" stroke="#8c4c0a" stroke-width="1.4"/><path d="M1429.4 49 L1446 64 M1433.5 46 L1451 61.5 M1439 44.5 L1452 56 M1431 55.5 L1441.5 44.6 M1434.5 62 L1449 47.6 M1441 64.5 L1452 53" stroke="#a84a22" stroke-width="1.1" fill="none"/></g><defs><linearGradient id="dsh" x1="0" x2="0" y1="0" y2="1"><stop offset="0" stop-color="#101420" stop-opacity="0"/><stop offset=".45" stop-color="#101420" stop-opacity=".04"/><stop offset=".8" stop-color="#101420" stop-opacity=".22"/><stop offset="1" stop-color="#06080e" stop-opacity=".72"/></linearGradient></defs><rect x="782" y="51" width="1055" height="12.2" fill="url(#dsh)"/><rect x="782" y="63" width="1055" height="1" fill="#05070c"/></svg>
<svg class="a" style="left:746px;top:440px" width="1091" height="501" viewBox="746 440 1091 501" font-family='"Liberation Sans", sans-serif'>
<defs>
<linearGradient id="bgLt" gradientUnits="userSpaceOnUse" x1="753" y1="0" x2="1179" y2="0"><stop offset="0" stop-color="#a0baee"/><stop offset="1" stop-color="#aac2ee"/></linearGradient>
<linearGradient id="bgLb" gradientUnits="userSpaceOnUse" x1="753" y1="0" x2="1179" y2="0"><stop offset="0" stop-color="#1e66f0"/><stop offset="1" stop-color="#4680de"/></linearGradient>
<linearGradient id="bgRt" gradientUnits="userSpaceOnUse" x1="1201" y1="0" x2="1817" y2="0"><stop offset="0" stop-color="#9cb9f0"/><stop offset="1" stop-color="#aac2ee"/></linearGradient>
<linearGradient id="bgRb" gradientUnits="userSpaceOnUse" x1="1201" y1="0" x2="1817" y2="0"><stop offset="0" stop-color="#0559ff"/><stop offset="1" stop-color="#3f78e2"/></linearGradient>
<linearGradient id="vm" gradientUnits="userSpaceOnUse" x1="0" y1="460" x2="0" y2="941"><stop offset="0" stop-color="#000"/><stop offset="1" stop-color="#fff"/></linearGradient>
<mask id="mk" maskUnits="userSpaceOnUse" x="746" y="440" width="1091" height="501"><rect x="746" y="440" width="1091" height="501" fill="url(#vm)"/></mask>
<linearGradient id="shd" x1="0" y1="0" x2="0" y2="1"><stop offset="0" stop-color="#0a1020" stop-opacity=".68"/><stop offset=".27" stop-color="#0a1020" stop-opacity=".4"/><stop offset=".6" stop-color="#0a1020" stop-opacity=".15"/><stop offset="1" stop-color="#0a1020" stop-opacity="0"/></linearGradient>
<pattern id="hatchR" width="3" height="3" patternUnits="userSpaceOnUse"><rect width="3" height="3" fill="#b2324c"/><rect width="1" height="1" fill="#c04a62"/><rect x="2" y="2" width="1" height="1" fill="#a02a44"/></pattern>
<clipPath id="cpL"><rect x="753" y="440" width="426" height="501"/></clipPath>
<clipPath id="cpR"><rect x="1201" y="440" width="616" height="501"/></clipPath>
</defs>
<rect x="746" y="440" width="7" height="501" fill="#4d8df0"/>
<rect x="746" y="440" width="1.5" height="501" fill="#7fb2f6"/>
<rect x="749" y="820" width="3" height="50" fill="#58c0d8" opacity=".6"/>
<g clip-path="url(#cpL)">
<rect x="753" y="440" width="426" height="501" fill="url(#bgLt)"/><rect x="753" y="440" width="426" height="501" fill="url(#bgLb)" mask="url(#mk)"/>
<path d="M1128 455 L1179 455 L1179 487 Z" fill="#55c878" opacity=".85"/>
<path d="M1128 455 L1179 487 M1140 455 L1179 480 M1150 455 L1179 474" stroke="#64ee6e" stroke-width="1" fill="none"/>
<rect x="836" y="455" width="35" height="486" fill="url(#hatchR)" opacity=".9"/>
<rect x="836" y="455" width="2.2" height="486" fill="#c80c18"/><rect x="868.8" y="455" width="2.2" height="486" fill="#c80c18"/>
<rect x="851.2" y="455" width="3.8" height="486" fill="#cc0c1a"/>
<path d="M853.1 455 V941" stroke="#f0a0a8" stroke-width=".9" stroke-dasharray="5 4" opacity=".8"/>
<path d="M832.8 461 L860.8 461 L925.2 483.7 L931 488 L886 488 L836 464 Z" fill="#cfc45a" opacity=".62"/>
<path d="M832.8 461.4 L884 486.5 M842 461.4 L893 487 M851 461.4 L903 487 M860.8 461.4 L925.2 483.7 M846 464 L912 487" stroke="#f2e63c" stroke-width="1" fill="none" opacity=".9"/>
<path d="M783 617 L880 669 L880 685 L783 638 Z" fill="#c6c264" opacity=".62"/>
<path d="M783 617 L880 669 M783 622 L880 673 M783 628 L880 678 M783 633 L880 681 M783 638 L880 685" stroke="#f2ec3a" stroke-width="1" fill="none" opacity=".9"/>
<path d="M783 677 L858 671 L858 675 L783 682 Z" fill="#5de06a"/><path d="M783 679.5 L858 673" stroke="#d8ffd0" stroke-width=".8" stroke-dasharray="3 2"/>
<path d="M857 536 L877 522 L881 524 L881 552 L868 558 L866 545 Z" fill="#9a9fae" opacity=".9"/><path d="M866 545 L868 558" stroke="#c03030" stroke-width="2"/>
<path d="M783 474 L797 466 M821 577 L836 569 M783 603 L797 595 M808 586 L812 584 M821 613 L836 605 M808 622 L812 620 M783 639 L797 631 M862 585 L878 576 M848 561 L852 558 M850 597 L853 595 M869 542 L878 537" stroke="#111" stroke-width="1" fill="none"/>
<path d="M783 513 L836 510 M783 576 L836 544 M783 807 L880 804" stroke="#f0e840" stroke-width="1" stroke-dasharray="9 6" fill="none"/>
<path d="M783 513 L836 510 M783 576 L836 544" stroke="#6a78c8" stroke-width=".6" fill="none" opacity=".6"/>
<path d="M983 469.5 L997 461.5 M969 479 L973 477 M1024 479 L1040 469.5 M1049 463 L1053 460.5" stroke="#111" stroke-width="1" fill="none"/>
<path d="M930 482 L953 466" stroke="#f0e840" stroke-width="1" stroke-dasharray="7 5"/>
<path d="M905 455 V487" stroke="#38c040" stroke-width="4" opacity=".8"/><path d="M909 487 L913 478 L917 487Z" fill="#18c020"/>
<path d="M890.5 455 V470" stroke="#111" stroke-width="1.2"/>
<path d="M753 802 L768 802 L987 905 L968 918 L753 822 Z" fill="#c4c25e" opacity=".66"/>
<path d="M753 802 L987 905 M753 807 L980 909 M753 813 L974 913 M753 818 L968 917 M753 822 L960 916 M768 802 L987 905" stroke="#f6f032" stroke-width="1.1" fill="none"/>
<path d="M760 812 L965 906" stroke="#3a78e0" stroke-width="1.6" stroke-dasharray="6 5" fill="none"/>
<path d="M753 843 L946 932 L935 941 L900 941 L753 868 Z" fill="#4cc48a" opacity=".8"/>
<path d="M753 843 L946 932 M753 851 L930 941 M753 858 L915 941 M753 868 L900 941" stroke="#5cf062" stroke-width="1.3" fill="none"/>
<path d="M753 927 L782 941 L753 941 Z" fill="#4cc48a" opacity=".85"/><path d="M753 927 L782 941 M753 934 L768 941" stroke="#5cf062" stroke-width="1.3"/>
<rect x="836" y="800" width="35" height="141" fill="#b8304a" opacity=".55"/>
<rect x="836" y="800" width="2.2" height="141" fill="#c80c18"/><rect x="868.8" y="800" width="2.2" height="141" fill="#c80c18"/><rect x="851.2" y="800" width="3.8" height="141" fill="#cc0c1a" opacity=".9"/>
<path d="M890.5 813 V941" stroke="#111" stroke-width="1.2" stroke-dasharray="22 7"/>
<path d="M910 815 L926 925" stroke="#e8e070" stroke-width="1" stroke-dasharray="8 5"/>
<path d="M955 813 L961 813 L972 897 L966 897 Z" fill="#50c878" opacity=".85"/><path d="M955 813 L966 897 M961 813 L972 897" stroke="#58e860" stroke-width="1"/>
<path d="M1004 897 L1108 813 L1179 813 L1179 838 L1047 941 L1000 941 Z" fill="#48b890" opacity=".8"/>
<path d="M1004 897 L1108 813 M1015 905 L1128 813 M1024 913 L1150 813 M1004 941 L1162 813 M1022 941 L1179 817 M1047 941 L1179 838" stroke="#5cf062" stroke-width="1.3" fill="none"/>
<path d="M1010 930 L1160 815" stroke="#d8ffd0" stroke-width="1" stroke-dasharray="7 7" fill="none" opacity=".8"/>
<path d="M959 914 L972 920 L984 914 L984 941 L959 941 Z" fill="#d02838" opacity=".9"/>
<path d="M985 898 L1010 903 L1010 941 L985 941 Z" fill="#c83040" opacity=".85"/>
<path d="M990 902 L1004 906 L1004 935 L990 935Z" fill="#9a9a70" opacity=".7"/><path d="M962 935 a7 7 0 0 1 12 0 L974 941 H962Z M990 930 l8 -4 l3 8 l-9 4z" fill="#38a020"/>
<path d="M959 914 V941 M972 920 V941 M984 912 V941 M1009 903 V941" stroke="#e80000" stroke-width="2"/>
<path d="M1028 897 H1009 L966 931 M1038 901 H1019 L978 937 M1038 906.5 H1003 M1030 910.5 H990 L983 918 M1016 919 H1000 L984 932 M1022 933 H1003 L995 941 M1014 937.5 H1000 M965 930 H951 L940 941" stroke="#18f0f0" stroke-width="1.8" fill="none"/>
<text x="876.5" y="934" font-size="16" font-weight="700" fill="#000">Б</text>
<g transform="translate(1118.5,916)"><path d="M0 0 L18 -13" stroke="#a9a08f" stroke-width="6" stroke-linecap="round"/><path d="M0 0 L0 -19" stroke="#b5b0ac" stroke-width="6" stroke-linecap="round"/><path d="M0 0 L21 10" stroke="#c2bbb2" stroke-width="6" stroke-linecap="round"/><path d="M0 -33 L7.5 -21 Q0 -17 -7.5 -21 Z" fill="#0000c8"/><path d="M26 -19.5 L22.5 -10 L11.5 -17.5 Z" fill="#0a7a1a"/><path d="M35 17 L19.5 14.5 L25.5 5 Z" fill="#e60000"/><path d="M5.5 -37 H15 L5.5 -26.5 H15" fill="none" stroke="#1010d0" stroke-width="1.1"/><path d="M23.5 -29 L27 -24 L31 -29.5 M27 -24 L25.5 -19.5" fill="none" stroke="#19b050" stroke-width="1.2"/><path d="M28.5 -4 L38.5 6 M38.5 -3.5 L28.5 6.5" fill="none" stroke="#d01818" stroke-width="1"/></g>
<rect x="753" y="461" width="426" height="16" fill="url(#shd)"/>
</g>
<rect x="1179" y="440" width="8" height="501" fill="#dbe5f5"/>
<rect x="1186" y="440" width="1" height="501" fill="#50505a"/>
<rect x="1187" y="440" width="6" height="501" fill="#a9a9a9"/>
<rect x="1193" y="440" width="1" height="501" fill="#60606a"/>
<rect x="1194" y="440" width="7" height="501" fill="#dbe5f5"/>
<rect x="1179" y="461" width="22" height="16" fill="url(#shd)"/>
<g clip-path="url(#cpR)">
<rect x="1201" y="440" width="616" height="501" fill="url(#bgRt)"/><rect x="1201" y="440" width="616" height="501" fill="url(#bgRb)" mask="url(#mk)"/>
<path d="M1713 460 L1812 506 V601 M1812 509 L1648 640 V733 L1812 601 M1648 733 L1201 538 M1487 460 L1812 601 M1293 483.4 L1648 640 M1201 455 L1213 470" stroke="#b0f4a4" stroke-width="1" stroke-dasharray="2.2 2.2" fill="none"/>
<path d="M1295 486 L1690 663 M1296 451.9 L1672 612.5 M1296 456.9 L1672 617.5 M1296 461.9 L1672 622.5 M1296 466.9 L1672 627.5" stroke="#000" stroke-width="1.2" stroke-dasharray="1.8 2.4" fill="none"/>
<path d="M1330 472 L1660 622 M1340 470 L1665 617 M1350 478 L1650 612" stroke="#10203a" stroke-width=".8" stroke-dasharray="7 5 2 5" fill="none" opacity=".8"/>
<path d="M1316.5 456.0 V501.0 M1342.9 467.3 V512.8 M1369.2 478.6 V524.6 M1395.6 489.9 V536.4 M1421.9 501.2 V548.2 M1448.3 512.5 V560.0 M1474.7 523.8 V571.8 M1501.0 535.1 V583.6 M1527.4 546.4 V595.4 M1553.7 557.7 V607.2 M1580.1 569.0 V619.0 M1606.5 580.3 V630.8 M1632.8 591.6 V642.6 M1659.2 602.9 V654.4 M1686 600 V668 M1666 598 V660" stroke="#000" stroke-width="1.15" stroke-dasharray="5 2 1 2" fill="none"/>
<path d="M1290 455 V484 M1317 468.8 V496.4 M1475 521 V566 M1501.5 534 V578" stroke="#b01010" stroke-width="2.2" fill="none"/>
<path d="M1316 464 L1345 476" stroke="#2a9a3a" stroke-width="3"/>
<path d="M1475 532 L1501 544 L1475 566 M1475 532 L1490 560 M1501 544 L1501 550" stroke="#46d89a" stroke-width="1.2" fill="none"/>
<path d="M1288.8 483 l3.6 -3 l3.2 3.8 l-3.8 3z M1499 542 l4 -3 l3 4 l-4 3z M1473 530 l4 -3 l3 4 l-4 3z" fill="#20d020"/><circle cx="1476" cy="530" r="2" fill="#18e0e0"/><circle cx="1502" cy="548" r="2" fill="#18e0e0"/>
<circle cx="1509" cy="523" r="1.6" fill="none" stroke="#e040e0" stroke-width="1"/><rect x="1420" y="471" width="1.5" height="1.5" fill="#1010c0"/>
<g font-size="16" font-weight="700" fill="#000" stroke="#000" stroke-width=".35" text-anchor="middle"><text x="1386.6" y="470.7">5</text><text x="1412.0" y="481.4">6</text><text x="1439.8" y="493.2">7</text><text x="1465.6" y="505.7">8</text><text x="1492.0" y="515.7">9</text><text x="1520.9" y="527.7">10</text><text x="1546.7" y="539.7">11</text><text x="1572.0" y="551.1">12</text><text x="1598.9" y="562.7">13</text><text x="1625.7" y="574.3">14</text><text x="1651.0" y="586.2">15</text><text x="1678.0" y="597.7">16</text><text x="1308.0" y="504.7">2</text><text x="1334.0" y="516.0">3</text><text x="1361.3" y="526.7">4</text><text x="1386.6" y="539.2">5</text><text x="1412.4" y="551.1">6</text><text x="1439.8" y="561.4">7</text><text x="1465.6" y="573.3">8</text><text x="1492.0" y="585.2">9</text><text x="1520.0" y="596.5">10</text><text x="1545.7" y="608.9">11</text><text x="1572.0" y="620.7">12</text><text x="1598.9" y="631.2">13</text><text x="1625.7" y="643.0">14</text><text x="1650.0" y="655.7">15</text><text x="1678.4" y="667.3">16</text></g>
<g font-size="16" font-weight="700" fill="#000" stroke="#000" stroke-width=".35" text-anchor="middle" letter-spacing="1"><text x="1686" y="610.5">+11.675</text><text x="1686" y="620">+9.675</text><text x="1686" y="625">+8.075</text><text x="1686" y="630">+6.875</text><text x="1686" y="633">+6.470</text><text x="1686" y="662">-0.000</text><text x="1273" y="479">-0.000</text><text x="1275" y="479">-0.200</text></g>
<g transform="translate(1756.7,917)"><path d="M0 0 L18 -13" stroke="#a9a08f" stroke-width="6" stroke-linecap="round"/><path d="M0 0 L0 -19" stroke="#b5b0ac" stroke-width="6" stroke-linecap="round"/><path d="M0 0 L21 10" stroke="#c2bbb2" stroke-width="6" stroke-linecap="round"/><path d="M0 -33 L7.5 -21 Q0 -17 -7.5 -21 Z" fill="#0000c8"/><path d="M26 -19.5 L22.5 -10 L11.5 -17.5 Z" fill="#0a7a1a"/><path d="M35 17 L19.5 14.5 L25.5 5 Z" fill="#e60000"/><path d="M5.5 -37 H15 L5.5 -26.5 H15" fill="none" stroke="#1010d0" stroke-width="1.1"/><path d="M23.5 -29 L27 -24 L31 -29.5 M27 -24 L25.5 -19.5" fill="none" stroke="#19b050" stroke-width="1.2"/><path d="M28.5 -4 L38.5 6 M38.5 -3.5 L28.5 6.5" fill="none" stroke="#d01818" stroke-width="1"/></g>
<rect x="1201" y="461" width="616" height="16" fill="url(#shd)"/>
</g>
<rect x="1817" y="440" width="7" height="501" fill="#dbe5f5"/>
<rect x="1824" y="440" width="1" height="501" fill="#4a4a52"/>
<rect x="1825" y="440" width="12" height="501" fill="#a8a8a8"/>
<rect x="1817" y="461" width="20" height="16" fill="url(#shd)"/>
</svg>
<div class="a" style="left:19px;top:-20px;width:761px;height:819px;border-radius:8px;box-shadow:0 2px 9px 1px rgba(0,0,0,.42)"></div>
<svg class="a" style="left:10px;top:0px" width="780" height="812" viewBox="10 0 780 812" font-family='"Liberation Sans", sans-serif'>
<defs>
<linearGradient id="fgV" gradientUnits="userSpaceOnUse" x1="0" y1="455" x2="0" y2="800"><stop offset="0" stop-color="#d4e4f8"/><stop offset=".35" stop-color="#b7d2f4"/><stop offset="1" stop-color="#5b96ea"/></linearGradient>
<linearGradient id="fgH" gradientUnits="userSpaceOnUse" x1="700" y1="0" x2="782" y2="0"><stop offset="0" stop-color="#ecf8fb"/><stop offset=".35" stop-color="#e8f6f6"/><stop offset=".55" stop-color="#a9dfe6"/><stop offset=".68" stop-color="#6aa6ee"/><stop offset="1" stop-color="#5b96ea"/></linearGradient>
<clipPath id="fr"><path d="M17.9 -20 H781.9 V795 Q781.9 801.5 775.4 801.5 H24.4 Q17.9 801.5 17.9 795Z"/></clipPath>
</defs>
<path d="M17.2 -20 H782.6 V795.2 Q782.6 802.2 775.6 802.2 H24.2 Q17.2 802.2 17.2 795.2Z" fill="#5c6870"/>
<path d="M17.9 -20 H781.9 V795 Q781.9 801.5 775.4 801.5 H24.4 Q17.9 801.5 17.9 795Z" fill="#f7fdff"/>
<g clip-path="url(#fr)">
<path d="M18.7 -20 H781 V794.6 Q781 800.6 775 800.6 H24.7 Q18.7 800.6 18.7 794.6Z" fill="#ecf8fb"/>
<rect x="690" y="795" width="92" height="5.6" fill="url(#fgH)"/>
<rect x="776.9" y="455" width="4.1" height="341" fill="url(#fgV)"/>
<path d="M776.9 794 H781 V794.6 Q781 800.6 775 800.6 H765 V795.8 H776.9Z" fill="#5b96ea"/>
</g>
<g filter="url(#bl2)">
<defs><filter id="bl2" x="-50%" y="-50%" width="200%" height="200%"><feGaussianBlur stdDeviation="1.6"/></filter></defs>
<rect x="19" y="137" width="5" height="16" fill="#f3e4a0" opacity=".9"/>
<rect x="19" y="123" width="5" height="12" fill="#c9dcf6" opacity=".9"/><rect x="19" y="155" width="5" height="12" fill="#c0d4f4" opacity=".9"/>
<rect x="19" y="203" width="5" height="12" fill="#c9d6f2" opacity=".9"/>
<rect x="19" y="273" width="5" height="16" fill="#f3e4a0" opacity=".9"/>
<rect x="19" y="259" width="5" height="12" fill="#c9dcf6" opacity=".9"/><rect x="19" y="291" width="5" height="12" fill="#c0d4f4" opacity=".9"/>
<rect x="19" y="339" width="5" height="12" fill="#c9d6f2" opacity=".9"/>
<rect x="19" y="409" width="5" height="16" fill="#f3e4a0" opacity=".9"/>
<rect x="19" y="395" width="5" height="12" fill="#c9dcf6" opacity=".9"/><rect x="19" y="427" width="5" height="12" fill="#c0d4f4" opacity=".9"/>
<rect x="19" y="475" width="5" height="12" fill="#c9d6f2" opacity=".9"/>
<rect x="19" y="545" width="5" height="16" fill="#f3e4a0" opacity=".9"/>
<rect x="19" y="531" width="5" height="12" fill="#c9dcf6" opacity=".9"/><rect x="19" y="563" width="5" height="12" fill="#c0d4f4" opacity=".9"/>
<rect x="19" y="611" width="5" height="12" fill="#c9d6f2" opacity=".9"/>
<rect x="19" y="681" width="5" height="16" fill="#f3e4a0" opacity=".9"/>
<rect x="19" y="667" width="5" height="12" fill="#c9dcf6" opacity=".9"/><rect x="19" y="699" width="5" height="12" fill="#c0d4f4" opacity=".9"/>
<rect x="19" y="747" width="5" height="12" fill="#c9d6f2" opacity=".9"/>
<rect x="19" y="36" width="5" height="12" fill="#c9d6f2"/><rect x="19" y="64" width="5" height="12" fill="#c9d6f2"/>
<rect x="86" y="796" width="12" height="5" fill="#bcd6f6"/><rect x="190" y="796" width="12" height="5" fill="#bcd6f6"/>
</g>
<g filter="url(#bl2)"><rect x="25" y="-3" width="14" height="8" fill="#5a2a80"/><rect x="27" y="4" width="10" height="2" fill="#3a5ad0"/><rect x="60" y="0" width="50" height="8" fill="#d2dcf4" opacity=".55"/><rect x="118" y="0" width="22" height="7" fill="#dccdec" opacity=".5"/><rect x="152" y="3" width="26" height="6" fill="#8fb0ec" opacity=".7"/><rect x="186" y="0" width="40" height="6" fill="#d8e4f6" opacity=".6"/><rect x="12" y="4" width="9" height="14" fill="#c8e8b8" opacity=".5"/></g>
<text x="44" y="-1.6" font-size="12" fill="#111" textLength="312">Эскиз (сечения профиля) - Tekla Structures - просмотр эскизов, [y]</text>
<rect x="24.3" y="10" width="751.7" height="785.7" fill="#72787e"/>
<rect x="25.1" y="11.3" width="750.1" height="783.5" fill="#ffffff"/>
<rect x="25.1" y="13.1" width="750.1" height="33" fill="#f0f0f0"/>
<rect x="25.1" y="45.3" width="747.8" height="747.5" fill="#8c8c8c"/>
<rect x="25.6" y="46" width="747.2" height="746.7" fill="#2a1010"/>
<rect x="26.5" y="46.5" width="745.8" height="746.2" fill="#f00505"/>
<rect x="31.1" y="51.3" width="736.7" height="738.4" fill="#000"/>
<rect x="26.2" y="46.5" width="1.6" height="1.4" fill="#000"/><rect x="770.6" y="791.3" width="2" height="1.4" fill="#000"/><rect x="27.4" y="791" width="1.2" height="1.3" fill="#000"/><rect x="771" y="46.5" width="1.3" height="6" fill="#000"/>
<g clip-path="url(#cv)"><defs><clipPath id="cv"><rect x="26.2" y="46.5" width="746.1" height="746.2"/></clipPath></defs>
<path d="M455.5 41.2 V793" stroke="#fff" stroke-width="1.25" stroke-dasharray="9 6 2.95 6"/>
<path d="M3.1 421.45 H773" stroke="#fff" stroke-width="1.25" stroke-dasharray="9 6 3 6"/>
<path d="M26 308.9 L593.6 402.4 M515.9 362.1 L26 619.4 M515.9 362.1 L290 792 M455.5 421.45 L26 481 M455.5 421.45 L84.5 792 M593.6 402.4 L26 672" stroke="#f0e85c" stroke-width="1" fill="none"/>
<circle cx="456.3" cy="422.1" r="138.9" fill="none" stroke="#fff" stroke-width="1.7"/>
<polygon points="590.6,460.7 569.3,504.3 534.3,538.0 490.0,557.7 441.6,561.0 395.0,547.6 355.7,519.1 328.6,478.8 316.9,431.7 322.0,383.5 343.3,339.9 378.3,306.2 422.6,286.5 471.0,283.2 517.6,296.6 556.9,325.1 584.0,365.4 595.7,412.5" fill="none" stroke="#fff" stroke-width="1.4"/>
<circle cx="456.3" cy="422.1" r="85.2" fill="none" stroke="#fff" stroke-width="2.0"/>
<polygon points="539.0,445.9 523.6,475.7 497.9,497.3 466.0,507.6 432.5,504.8 402.7,489.4 381.1,463.7 370.8,431.8 373.6,398.3 389.0,368.5 414.7,346.9 446.6,336.6 480.1,339.4 509.9,354.8 531.5,380.5 541.8,412.4" fill="none" stroke="#fff" stroke-width="1.7"/>
<g font-size="14.2" fill="#d2d2d2"><text x="485.2" y="390.7" textLength="67.7">r1 (12.00)</text><text x="524.6" y="411.5" textLength="66.8">r2 (19.50)</text></g>
</g>
</svg>
<svg class="a" style="left:25px;top:12px" width="750" height="34" viewBox="25 12 750 34"><defs><linearGradient id="sqb" x1="0" y1="0" x2="1" y2="1"><stop offset="0" stop-color="#b4d2f4"/><stop offset=".5" stop-color="#6a9ad8"/><stop offset="1" stop-color="#2f5fae"/></linearGradient><linearGradient id="cone" x1="0" y1="0" x2="1" y2="0"><stop offset="0" stop-color="#7cf04c"/><stop offset=".45" stop-color="#35c030"/><stop offset="1" stop-color="#0e7a14"/></linearGradient><linearGradient id="fadeR" x1="0" x2="1"><stop offset="0" stop-color="#37a037"/><stop offset=".6" stop-color="#37a037"/><stop offset="1" stop-color="#37a037" stop-opacity="0"/></linearGradient><linearGradient id="fadeD" x1="0" x2="0" y1="0" y2="1"><stop offset="0" stop-color="#37a037"/><stop offset=".6" stop-color="#37a037"/><stop offset="1" stop-color="#37a037" stop-opacity="0"/></linearGradient><linearGradient id="bcl" x1="0" y1="0" x2="1" y2="1"><stop offset="0" stop-color="#ffffff"/><stop offset=".6" stop-color="#7db0ee"/><stop offset="1" stop-color="#2a6fd8"/></linearGradient></defs><path d="M28.2 17.6 l2.3 -2.1 v2.1z" fill="#969696"/><path d="M28.2 22.7 l2.3 -2.1 v2.1z" fill="#969696"/><path d="M28.2 27.7 l2.3 -2.1 v2.1z" fill="#969696"/><path d="M28.2 32.8 l2.3 -2.1 v2.1z" fill="#969696"/><path d="M28.2 37.8 l2.3 -2.1 v2.1z" fill="#969696"/><path d="M28.2 42.9 l2.3 -2.1 v2.1z" fill="#969696"/><rect x="127.7" y="16.2" width="1" height="25.4" fill="#7a7a7a"/><rect x="290.8" y="16.2" width="1" height="25.4" fill="#7a7a7a"/><rect x="391.9" y="16.2" width="1" height="25.4" fill="#7a7a7a"/><rect x="492.9" y="16.2" width="1" height="25.4" fill="#7a7a7a"/><rect x="562.9" y="16.2" width="1" height="25.4" fill="#7a7a7a"/><rect x="570.9" y="16.2" width="1" height="25.4" fill="#7a7a7a"/><rect x="640.9" y="16.2" width="1" height="25.4" fill="#7a7a7a"/><path d="M36 31.4 L46.7 20.7 L52.5 26.9 L59.6 19.3" fill="none" stroke="#37a037" stroke-width="1.2"/><g transform="translate(45.4,34.2)"><path d="M0 0 L7 -3.3 V3.3 Z" fill="#ffffff" stroke="#b4b4ac" stroke-width=".7"/><path d="M1.5 .7 L7 3.3 V.6Z" fill="#c4c4bc"/><path d="M-.8 -.6 H1.6 V.6 H-.8Z" fill="#111"/><rect x="7" y="-3.3" width="7.7" height="6.6" fill="#f2bc55"/><rect x="7" y="-3.3" width="7.7" height="2" fill="#f9dc98"/><rect x="7" y="2" width="7.7" height="1.3" fill="#dfa43a"/></g><path d="M72.1 36.3 Q73.5 22.5 90.5 18.4 Q76 24 73.2 36.4Z" fill="#37a037" stroke="#37a037" stroke-width=".8"/><g transform="translate(76.1,34.2)"><path d="M0 0 L7 -3.3 V3.3 Z" fill="#ffffff" stroke="#b4b4ac" stroke-width=".7"/><path d="M1.5 .7 L7 3.3 V.6Z" fill="#c4c4bc"/><path d="M-.8 -.6 H1.6 V.6 H-.8Z" fill="#111"/><rect x="7" y="-3.3" width="7.7" height="6.6" fill="#f2bc55"/><rect x="7" y="-3.3" width="7.7" height="2" fill="#f9dc98"/><rect x="7" y="2" width="7.7" height="1.3" fill="#dfa43a"/></g><circle cx="109" cy="29.8" r="9.7" fill="none" stroke="#37a037" stroke-width="1.3"/><g transform="translate(107.3,34.2)"><path d="M0 0 L7 -3.3 V3.3 Z" fill="#ffffff" stroke="#b4b4ac" stroke-width=".7"/><path d="M1.5 .7 L7 3.3 V.6Z" fill="#c4c4bc"/><path d="M-.8 -.6 H1.6 V.6 H-.8Z" fill="#111"/><rect x="7" y="-3.3" width="7.7" height="6.6" fill="#f2bc55"/><rect x="7" y="-3.3" width="7.7" height="2" fill="#f9dc98"/><rect x="7" y="2" width="7.7" height="1.3" fill="#dfa43a"/></g><path d="M138.5 29.1 L149.6 18.9 M141.1 23.4 L146.5 31.4 M145.6 19.8 L152.3 26.9" fill="none" stroke="#1c7a30" stroke-width="1.9"/><g transform="translate(146.0,34.2)"><path d="M0 0 L7 -3.3 V3.3 Z" fill="#ffffff" stroke="#b4b4ac" stroke-width=".7"/><path d="M1.5 .7 L7 3.3 V.6Z" fill="#c4c4bc"/><path d="M-.8 -.6 H1.6 V.6 H-.8Z" fill="#111"/><rect x="7" y="-3.3" width="7.7" height="6.6" fill="#f2bc55"/><rect x="7" y="-3.3" width="7.7" height="2" fill="#f9dc98"/><rect x="7" y="2" width="7.7" height="1.3" fill="#dfa43a"/></g><path d="M169.2 21.6 H184.3 M173.2 18.5 V34 M180.8 18.5 V29.1" fill="none" stroke="#1c7a30" stroke-width="2.3"/><g transform="translate(177.2,34.2)"><path d="M0 0 L7 -3.3 V3.3 Z" fill="#ffffff" stroke="#b4b4ac" stroke-width=".7"/><path d="M1.5 .7 L7 3.3 V.6Z" fill="#c4c4bc"/><path d="M-.8 -.6 H1.6 V.6 H-.8Z" fill="#111"/><rect x="7" y="-3.3" width="7.7" height="6.6" fill="#f2bc55"/><rect x="7" y="-3.3" width="7.7" height="2" fill="#f9dc98"/><rect x="7" y="2" width="7.7" height="1.3" fill="#dfa43a"/></g><path d="M203.9 18.5 V32.3 M200.3 21.1 H212.4 M200.3 28.9 H211.9" fill="none" stroke="#1c7a30" stroke-width="2.3"/><g transform="translate(207.9,34.2)"><path d="M0 0 L7 -3.3 V3.3 Z" fill="#ffffff" stroke="#b4b4ac" stroke-width=".7"/><path d="M1.5 .7 L7 3.3 V.6Z" fill="#c4c4bc"/><path d="M-.8 -.6 H1.6 V.6 H-.8Z" fill="#111"/><rect x="7" y="-3.3" width="7.7" height="6.6" fill="#f2bc55"/><rect x="7" y="-3.3" width="7.7" height="2" fill="#f9dc98"/><rect x="7" y="2" width="7.7" height="1.3" fill="#dfa43a"/></g><path d="M233.8 35.4 Q234 21 248.8 20" fill="none" stroke="#d45868" stroke-width="1.5"/><rect x="232.0" y="34.8" width="3.8" height="3.8" fill="#e01010"/><rect x="248.0" y="18.0" width="3.8" height="3.8" fill="#e01010"/><g transform="translate(239.1,34.2)"><path d="M0 0 L7 -3.3 V3.3 Z" fill="#ffffff" stroke="#b4b4ac" stroke-width=".7"/><path d="M1.5 .7 L7 3.3 V.6Z" fill="#c4c4bc"/><path d="M-.8 -.6 H1.6 V.6 H-.8Z" fill="#111"/><rect x="7" y="-3.3" width="7.7" height="6.6" fill="#f2bc55"/><rect x="7" y="-3.3" width="7.7" height="2" fill="#f9dc98"/><rect x="7" y="2" width="7.7" height="1.3" fill="#dfa43a"/></g><path d="M264 20.7 V38.5 L280.5 22 M261.8 23.4 Q272 24.5 277 30.6" fill="none" stroke="#cc4a5a" stroke-width="1.6"/><rect x="262.2" y="17.1" width="3.8" height="3.8" fill="#e01010"/><rect x="279.1" y="20.2" width="3.8" height="3.8" fill="#e01010"/><g transform="translate(271.1,36.3)"><path d="M0 0 L7 -3.3 V3.3 Z" fill="#ffffff" stroke="#b4b4ac" stroke-width=".7"/><path d="M1.5 .7 L7 3.3 V.6Z" fill="#c4c4bc"/><path d="M-.8 -.6 H1.6 V.6 H-.8Z" fill="#111"/><rect x="7" y="-3.3" width="7.7" height="6.6" fill="#f2bc55"/><rect x="7" y="-3.3" width="7.7" height="2" fill="#f9dc98"/><rect x="7" y="2" width="7.7" height="1.3" fill="#dfa43a"/></g><path d="M301.1 20.9 H321.6" stroke="#3faa4a" stroke-width="2"/><path d="M301.1 24.7 H321.6" stroke="#dc2248" stroke-width="2"/><g transform="translate(309.1,34.2)"><path d="M0 0 L7 -3.3 V3.3 Z" fill="#ffffff" stroke="#b4b4ac" stroke-width=".7"/><path d="M1.5 .7 L7 3.3 V.6Z" fill="#c4c4bc"/><path d="M-.8 -.6 H1.6 V.6 H-.8Z" fill="#111"/><rect x="7" y="-3.3" width="7.7" height="6.6" fill="#f2bc55"/><rect x="7" y="-3.3" width="7.7" height="2" fill="#f9dc98"/><rect x="7" y="2" width="7.7" height="1.3" fill="#dfa43a"/></g><rect x="332.3" y="20" width="17" height="1.8" fill="url(#fadeR)"/><rect x="334.1" y="20" width="1.8" height="16.5" fill="url(#fadeD)"/><path d="M335.9 26.5 H340.8 V22" fill="none" stroke="#cc1830" stroke-width="1.1"/><g transform="translate(339.9,34.2)"><path d="M0 0 L7 -3.3 V3.3 Z" fill="#ffffff" stroke="#b4b4ac" stroke-width=".7"/><path d="M1.5 .7 L7 3.3 V.6Z" fill="#c4c4bc"/><path d="M-.8 -.6 H1.6 V.6 H-.8Z" fill="#111"/><rect x="7" y="-3.3" width="7.7" height="6.6" fill="#f2bc55"/><rect x="7" y="-3.3" width="7.7" height="2" fill="#f9dc98"/><rect x="7" y="2" width="7.7" height="1.3" fill="#dfa43a"/></g><rect x="367" y="20" width="14.8" height="1.8" fill="url(#fadeR)"/><rect x="364.8" y="22.5" width="1.8" height="13" fill="url(#fadeD)"/><rect x="363.9" y="18.9" width="4" height="4" fill="#e01010"/><g transform="translate(371.0,34.2)"><path d="M0 0 L7 -3.3 V3.3 Z" fill="#ffffff" stroke="#b4b4ac" stroke-width=".7"/><path d="M1.5 .7 L7 3.3 V.6Z" fill="#c4c4bc"/><path d="M-.8 -.6 H1.6 V.6 H-.8Z" fill="#111"/><rect x="7" y="-3.3" width="7.7" height="6.6" fill="#f2bc55"/><rect x="7" y="-3.3" width="7.7" height="2" fill="#f9dc98"/><rect x="7" y="2" width="7.7" height="1.3" fill="#dfa43a"/></g><path d="M404.9 34 L420 20.9" stroke="#e02020" stroke-width="1.3"/><rect x="403.1" y="32.2" width="3.8" height="3.8" fill="#e01010"/><rect x="418.2" y="19.0" width="3.8" height="3.8" fill="#e01010"/><g transform="translate(411.1,34.2)"><path d="M0 0 L7 -3.3 V3.3 Z" fill="#ffffff" stroke="#b4b4ac" stroke-width=".7"/><path d="M1.5 .7 L7 3.3 V.6Z" fill="#c4c4bc"/><path d="M-.8 -.6 H1.6 V.6 H-.8Z" fill="#111"/><rect x="7" y="-3.3" width="7.7" height="6.6" fill="#f2bc55"/><rect x="7" y="-3.3" width="7.7" height="2" fill="#f9dc98"/><rect x="7" y="2" width="7.7" height="1.3" fill="#dfa43a"/></g><path d="M434.9 22.9 H453" stroke="#ee5a50" stroke-width="1.3"/><rect x="432.9" y="21.0" width="3.8" height="3.8" fill="#e01010"/><rect x="451.0" y="21.0" width="3.8" height="3.8" fill="#e01010"/><g transform="translate(440.9,34.2)"><path d="M0 0 L7 -3.3 V3.3 Z" fill="#ffffff" stroke="#b4b4ac" stroke-width=".7"/><path d="M1.5 .7 L7 3.3 V.6Z" fill="#c4c4bc"/><path d="M-.8 -.6 H1.6 V.6 H-.8Z" fill="#111"/><rect x="7" y="-3.3" width="7.7" height="6.6" fill="#f2bc55"/><rect x="7" y="-3.3" width="7.7" height="2" fill="#f9dc98"/><rect x="7" y="2" width="7.7" height="1.3" fill="#dfa43a"/></g><path d="M468 20.9 V36" stroke="#d86a70" stroke-width="1.3"/><rect x="466.1" y="19.0" width="3.8" height="3.8" fill="#e01010"/><rect x="466.1" y="34.2" width="3.8" height="3.8" fill="#e01010"/><g transform="translate(473.0,34.2)"><path d="M0 0 L7 -3.3 V3.3 Z" fill="#ffffff" stroke="#b4b4ac" stroke-width=".7"/><path d="M1.5 .7 L7 3.3 V.6Z" fill="#c4c4bc"/><path d="M-.8 -.6 H1.6 V.6 H-.8Z" fill="#111"/><rect x="7" y="-3.3" width="7.7" height="6.6" fill="#f4cf8c"/><rect x="7" y="-3.3" width="7.7" height="2" fill="#fae6c0"/><rect x="7" y="2" width="7.7" height="1.3" fill="#e8c078"/></g><g transform="translate(502.5,0)"><path d="M0 31.6 L10.6 26.6 L23.4 27.6 L23.4 36 L13 40.2 L6.4 40.2Z" fill="#c9ced6"/><path d="M0 31.6 L10.6 26.6 L23.2 32.5 L12.4 39.6 L6 39.6Z" fill="#3f73a6"/><path d="M2 31.8 L10.8 27.8 L21 32.6 L12 38 L7 38Z" fill="#f3df58"/><path d="M12.6 39.8 L23.4 33 V36 L13 40.4Z" fill="#f4f4f4"/></g><rect x="514.6" y="22.4" width="10.6" height="10.6" fill="#46505c" opacity=".55"/><rect x="513.4" y="21.1" width="10.3" height="10.7" fill="url(#sqb)" stroke="#5878a8" stroke-width=".5"/><g transform="translate(533.3,0)"><path d="M0 31.6 L10.6 26.6 L23.4 27.6 L23.4 36 L13 40.2 L6.4 40.2Z" fill="#c9ced6"/><path d="M0 31.6 L10.6 26.6 L23.2 32.5 L12.4 39.6 L6 39.6Z" fill="#3f73a6"/><path d="M2 31.8 L10.8 27.8 L21 32.6 L12 38 L7 38Z" fill="#f3df58"/><path d="M12.6 39.8 L23.4 33 V36 L13 40.4Z" fill="#f4f4f4"/></g><path d="M550.2 17.1 L556.6 29.6 Q556.6 32.4 550.4 32.4 Q544.2 32.4 544.2 29.6Z" fill="url(#cone)"/><rect x="582" y="21.1" width="4.9" height="4.8" fill="#1f4a9e"/><rect x="589.1" y="21.1" width="4.8" height="4.8" fill="#6a8cc8"/><rect x="596" y="21.1" width="4.9" height="4.8" fill="#a9bddc"/><path d="M592.2 32.7 L595.6 37.6 L601.1 29.4" fill="none" stroke="#f05a28" stroke-width="1.3"/><path d="M614.4 20.7 V29.6 H617 M614.4 24.6 H617" fill="none" stroke="#8c8c8c" stroke-width="1"/><rect x="612" y="18.2" width="4.9" height="2.5" fill="#8c8c8c"/><rect x="616.9" y="23.4" width="5.8" height="2.5" fill="#8c8c8c"/><rect x="616.9" y="28.3" width="5.8" height="2.5" fill="#8c8c8c"/><path d="M627.6 22.9 L632.5 27.8 V33.6 L627.6 39.4 L622.3 34 Z" fill="#1450b4"/><path d="M627.6 22.9 L631.6 26.9 L626.7 33.3 L622.3 34 Z" fill="url(#bcl)"/><path d="M622.3 34 L626.7 33.3 L627.6 39.4Z" fill="#3f86e4"/><rect x="651.9" y="19.2" width="9.8" height="9.7" fill="#3236b4"/><rect x="654.3" y="20.2" width="5.2" height="3.2" fill="#f6d038"/><rect x="655.6" y="26.5" width="3.6" height="2.4" fill="#e4e4ee"/><g transform="translate(665.9,22.9)"><path d="M0 0 L5.3 4.9 L0 8.5 L-4.9 5.3Z" fill="#fdf3c8"/><path d="M0 0 L5.3 4.9 L0 8.5Z" fill="#f5dc88" opacity=".6"/><path d="M-4.9 5.3 L0 8.5 V16.5 L-4.9 11.1Z" fill="#f6c31a"/><path d="M0 8.5 L5.3 4.9 V11.1 L0 16.5Z" fill="#c8900c"/></g><rect x="683" y="19.2" width="9.8" height="9.7" fill="#3236b4"/><rect x="685.4" y="20.2" width="5.2" height="3.2" fill="#c4c8e8"/><rect x="686.7" y="26.5" width="3.6" height="2.4" fill="#e4e4ee"/><g transform="translate(697.1,22.9)"><path d="M0 0 L5.3 4.9 L0 8.5 L-4.9 5.3Z" fill="#fdf3c8"/><path d="M0 0 L5.3 4.9 L0 8.5Z" fill="#f5dc88" opacity=".6"/><path d="M-4.9 5.3 L0 8.5 V16.5 L-4.9 11.1Z" fill="#f6c31a"/><path d="M0 8.5 L5.3 4.9 V11.1 L0 16.5Z" fill="#c8900c"/></g><g transform="translate(719.8,22.9)"><path d="M0 0 L5.3 4.9 L0 8.5 L-4.9 5.3Z" fill="#fdf3c8"/><path d="M0 0 L5.3 4.9 L0 8.5Z" fill="#f5dc88" opacity=".6"/><path d="M-4.9 5.3 L0 8.5 V16.5 L-4.9 11.1Z" fill="#f6c31a"/><path d="M0 8.5 L5.3 4.9 V11.1 L0 16.5Z" fill="#c8900c"/></g><path d="M727.6 19.6 L732.8 25.4 M732.8 19.6 L727.6 25.4" stroke="#8a2a9c" stroke-width="1.5"/></svg>
<div class="a" style="left:754px;top:63px;width:1100px;height:398px;box-sizing:border-box;border:1px solid #080c14;border-radius:7px 0 0 7px;background:#7fa8da;box-shadow:inset 0 0 0 1px rgba(214,230,248,.85)"></div>
<div class="a" style="left:756px;top:65px;width:1091px;height:27px;border-radius:5px 0 0 0;background:linear-gradient(90deg,#4a566a 0px,#b9c9dd 14px,#dbe6f3 34px,#d3e1f1 95px,#a9c4e6 170px,#8fb4e0 290px,#8db2de)"></div>
<div class="a" style="left:758px;top:65px;width:1090px;height:3px;background:linear-gradient(rgba(255,255,255,.45),rgba(255,255,255,0))"></div>
<div class="a" style="left:900px;top:65px;width:950px;height:8px;background:linear-gradient(rgba(255,255,255,.22),rgba(255,255,255,.12) 70%,rgba(255,255,255,0))"></div>
<div class="a" style="left:1080px;top:84px;width:100px;height:7px;background:#6f90bd;filter:blur(2.5px);opacity:.6"></div>
<div class="a" style="left:1206px;top:84px;width:145px;height:7px;background:#6f90bd;filter:blur(2.5px);opacity:.6"></div>
<div class="a" style="left:1722px;top:84px;width:80px;height:7px;background:#6f90bd;filter:blur(2.5px);opacity:.6"></div>
<div class="a" style="left:1060px;top:74px;width:300px;height:16px;background:#7f9fcb;filter:blur(5px);opacity:.35"></div>
<div class="a" style="left:1690px;top:74px;width:140px;height:16px;background:#7f9fcb;filter:blur(5px);opacity:.35"></div>
<div class="a" style="left:1187px;top:73px;width:7px;height:19px;background:#6484b4;filter:blur(2px);opacity:.6"></div>
<div class="a" style="left:1828px;top:70px;width:4px;height:22px;background:#6484b4;filter:blur(2px);opacity:.5"></div>
<div class="a" style="left:756px;top:92px;width:4px;height:363px;background:linear-gradient(90deg,#05070a,#0c0f14 60%,#3a4656)"></div>
<div class="a" style="left:756px;top:455px;width:1091px;height:4px;background:linear-gradient(90deg,#05070a 0,#10151c 18px,#5b7ea8 30px,#86afe0 60px,#7ca6d8 120px,#7fa8da)"></div>
<div class="a" style="left:761px;top:454px;width:1091px;height:1px;background:linear-gradient(90deg,#5a6a80,#c0d8f4 40px)"></div>
<div class="a" style="left:760px;top:92px;width:1090px;height:362px;background:#3e4a5a"></div>
<div class="a" style="left:761px;top:93px;width:1090px;height:360px;background:#f0f0f0"></div>
<svg class="a" style="left:761px;top:69px" width="17" height="18" viewBox="0 0 17 18"><defs><linearGradient id="tkb" x1="0" x2="1"><stop offset="0" stop-color="#1a3aa8"/><stop offset="1" stop-color="#5a78d0"/></linearGradient></defs><path d="M0.3 3.4 L16.3 1 V13.4 L0.3 14.3Z" fill="#cc1840"/><path d="M0.3 14.3 L10 13.75 V16.2 L0.3 17Z" fill="url(#tkb)"/><g fill="#fff" opacity=".95"><ellipse cx="6" cy="5.3" rx="1.75" ry="1.05"/><ellipse cx="10" cy="4.9" rx="1.75" ry="1.05"/><ellipse cx="3.6" cy="7.6" rx="1.75" ry="1.05"/><ellipse cx="8" cy="7.2" rx="1.75" ry="1.05"/><ellipse cx="12.4" cy="6.8" rx="1.75" ry="1.05"/><ellipse cx="1.6" cy="9.9" rx="1.75" ry="1.05"/><ellipse cx="5.8" cy="9.5" rx="1.75" ry="1.05"/><ellipse cx="10.2" cy="9.1" rx="1.75" ry="1.05"/><ellipse cx="14.4" cy="8.7" rx="1.75" ry="1.05"/><ellipse cx="8" cy="11.6" rx="1.75" ry="1.05"/><ellipse cx="12.2" cy="11.2" rx="1.75" ry="1.05"/><ellipse cx="3.8" cy="12" rx="1.75" ry="1.05"/></g><path d="M3.6 7.6 L8 7.2 L12.4 6.8 M1.6 9.9 L14.4 8.7" stroke="#fff" stroke-width=".5" opacity=".6"/></svg>
<span class="t" style="left:782.5px;top:71.5px;font-size:12px;letter-spacing:-0.062px;color:#000;">Переменные</span>
<div class="a" style="left:767px;top:100px;width:1090px;height:318px;border:1px solid #d5dfe5;border-radius:3px;box-shadow:inset 0 0 0 1px #fff, 0 0 0 0 #fff;box-sizing:border-box"></div>
<span class="t" style="left:772.0px;top:114.5px;font-size:12px;letter-spacing:-0.109px;color:#000;">Категория:</span>
<div class="a" style="left:770px;top:136px;width:248px;height:244px;border:1px solid #828790;background:#fff;box-sizing:border-box"></div>
<div class="a" style="left:772px;top:138px;width:244px;height:15px;background:#3399ff"></div>
<span class="t" style="left:774.0px;top:139.1px;font-size:12px;letter-spacing:-0.078px;color:#fff;">Параметры эскиза</span>
<div class="a" style="left:1024px;top:111px;width:900px;height:277px;border:1px solid #828790;background:#fff;box-sizing:border-box"></div>
<div class="a" style="left:1025px;top:112px;width:900px;height:23px;background:linear-gradient(#ffffff,#ffffff 45%,#f7f8fa 50%,#f1f2f4)"></div>
<div class="a" style="left:1025px;top:135px;width:900px;height:1px;background:#d5d5d5"></div>
<div class="a" style="left:1143px;top:112px;width:1px;height:23px;background:linear-gradient(#f4f4f6,#dedfe2)"></div>
<div class="a" style="left:1209px;top:112px;width:1px;height:23px;background:linear-gradient(#f4f4f6,#dedfe2)"></div>
<div class="a" style="left:1319px;top:112px;width:1px;height:23px;background:linear-gradient(#f4f4f6,#dedfe2)"></div>
<div class="a" style="left:1429px;top:112px;width:1px;height:23px;background:linear-gradient(#f4f4f6,#dedfe2)"></div>
<div class="a" style="left:1539px;top:112px;width:1px;height:23px;background:linear-gradient(#f4f4f6,#dedfe2)"></div>
<div class="a" style="left:1644px;top:112px;width:1px;height:23px;background:linear-gradient(#f4f4f6,#dedfe2)"></div>
<span class="t" style="left:1032.5px;top:118.3px;font-size:12px;letter-spacing:0.042px;color:#000;">Имя</span>
<span class="t" style="left:1150.3px;top:118.3px;font-size:12px;letter-spacing:-0.015px;color:#000;">Формула</span>
<span class="t" style="left:1216.0px;top:118.3px;font-size:12px;letter-spacing:-0.036px;color:#000;">Значение</span>
<span class="t" style="left:1326.3px;top:118.3px;font-size:12px;letter-spacing:-0.118px;color:#000;">Тип значения</span>
<span class="t" style="left:1436.3px;top:118.3px;font-size:12px;letter-spacing:0.025px;color:#000;">Тип переменной</span>
<span class="t" style="left:1546.3px;top:118.3px;font-size:12px;letter-spacing:-0.199px;color:#000;">Видимость</span>
<span class="t" style="left:1650.2px;top:118.3px;font-size:12px;letter-spacing:-0.018px;color:#000;">Метка в диалоговом окне</span>
<span class="t" style="left:1033.3px;top:139.8px;font-size:12px;letter-spacing:-0.586px;color:#000;">r1</span>
<span class="t" style="left:1150.3px;top:139.8px;font-size:12px;letter-spacing:0.574px;color:#000;">=d/2</span>
<span class="t" style="left:1216.0px;top:139.8px;font-size:12px;letter-spacing:-0.606px;color:#000;">12.00</span>
<span class="t" style="left:1326.3px;top:139.8px;font-size:12px;letter-spacing:-0.128px;color:#000;">Длина</span>
<span class="t" style="left:1436.3px;top:139.8px;font-size:12px;letter-spacing:-0.266px;color:#000;">Расстояние</span>
<span class="t" style="left:1546.3px;top:139.8px;font-size:12px;letter-spacing:-0.078px;color:#000;">Скрыть</span>
<span class="t" style="left:1650.2px;top:139.8px;font-size:12px;letter-spacing:-0.398px;color:#000;">Радиус</span>
<span class="t" style="left:1033.3px;top:158.8px;font-size:12px;letter-spacing:-0.086px;color:#000;">r2</span>
<span class="t" style="left:1150.3px;top:158.8px;font-size:12px;letter-spacing:0.453px;color:#000;">=D/2</span>
<span class="t" style="left:1216.0px;top:158.8px;font-size:12px;letter-spacing:-0.606px;color:#000;">19.50</span>
<span class="t" style="left:1326.3px;top:158.8px;font-size:12px;letter-spacing:-0.128px;color:#000;">Длина</span>
<span class="t" style="left:1436.3px;top:158.8px;font-size:12px;letter-spacing:-0.266px;color:#000;">Расстояние</span>
<span class="t" style="left:1546.3px;top:158.8px;font-size:12px;letter-spacing:-0.078px;color:#000;">Скрыть</span>
<span class="t" style="left:1650.2px;top:158.8px;font-size:12px;letter-spacing:-0.398px;color:#000;">Радиус</span>
<span class="t" style="left:1033.3px;top:177.8px;font-size:12px;letter-spacing:-0.688px;color:#000;">d</span>
<span class="t" style="left:1150.3px;top:177.8px;font-size:12px;letter-spacing:-0.706px;color:#000;">24.00</span>
<span class="t" style="left:1216.0px;top:177.8px;font-size:12px;letter-spacing:-0.706px;color:#000;">24.00</span>
<span class="t" style="left:1326.3px;top:177.8px;font-size:12px;letter-spacing:-0.128px;color:#000;">Длина</span>
<span class="t" style="left:1436.3px;top:177.8px;font-size:12px;letter-spacing:-0.156px;color:#000;">Параметр</span>
<span class="t" style="left:1546.3px;top:177.8px;font-size:12px;letter-spacing:-0.207px;color:#000;">Показать</span>
<span class="t" style="left:1650.2px;top:177.8px;font-size:12px;letter-spacing:-0.138px;color:#000;">Диаметр резьбы</span>
<span class="t" style="left:1033.3px;top:196.8px;font-size:12px;letter-spacing:-0.672px;color:#000;">D</span>
<span class="t" style="left:1150.3px;top:196.8px;font-size:12px;letter-spacing:-0.706px;color:#000;">39.00</span>
<span class="t" style="left:1216.0px;top:196.8px;font-size:12px;letter-spacing:-0.706px;color:#000;">39.00</span>
<span class="t" style="left:1326.3px;top:196.8px;font-size:12px;letter-spacing:-0.128px;color:#000;">Длина</span>
<span class="t" style="left:1436.3px;top:196.8px;font-size:12px;letter-spacing:-0.156px;color:#000;">Параметр</span>
<span class="t" style="left:1546.3px;top:196.8px;font-size:12px;letter-spacing:-0.207px;color:#000;">Показать</span>
<span class="t" style="left:1650.2px;top:196.8px;font-size:12px;letter-spacing:-0.018px;color:#000;">Наружний диаметр</span>
<div class="a" style="left:1024px;top:394px;width:70px;height:23px;border:1px solid #707070;border-radius:3px;box-sizing:border-box;background:linear-gradient(#f4f4f4,#ebebeb 48%,#dddddd 52%,#cfcfcf);box-shadow:inset 0 0 0 1px rgba(255,255,255,.85)"></div>
<span class="t" style="left:1033.0px;top:398.9px;font-size:12px;letter-spacing:-0.148px;color:#000;">Добавить</span>
<div class="a" style="left:1100px;top:394px;width:64px;height:23px;border:1px solid #707070;border-radius:3px;box-sizing:border-box;background:linear-gradient(#f4f4f4,#ebebeb 48%,#dddddd 52%,#cfcfcf);box-shadow:inset 0 0 0 1px rgba(255,255,255,.85)"></div>
<span class="t" style="left:1110.0px;top:398.9px;font-size:12px;letter-spacing:-0.395px;color:#000;">Удалить</span>
<div class="a" style="left:881px;top:485px;width:413px;height:328px;box-sizing:border-box;border:1px solid #5872a0;border-radius:7px;background:linear-gradient(#b4d6f8 0,#add2f8 26px,#9cc4f6 60px,#78aef4 200px,#5b98f2 300px,#5794f0);box-shadow:inset 0 0 0 1px rgba(235,245,255,.75), 0 1px 7px 0 rgba(0,0,20,.4)"></div>
<div class="a" style="left:900px;top:487px;width:130px;height:24px;background:radial-gradient(ellipse at 30% 60%,rgba(200,240,190,.55),rgba(255,255,255,0) 70%)"></div>
<div class="a" style="left:1185px;top:487px;width:20px;height:25px;background:linear-gradient(90deg,rgba(255,255,255,0),rgba(225,240,255,.8) 50%,rgba(255,255,255,0))"></div>
<div class="a" style="left:1241px;top:485px;width:47px;height:19px;box-sizing:border-box;border:1px solid #5c7ca6;border-top:none;border-radius:0 0 5px 5px;background:linear-gradient(rgba(255,255,255,.12),rgba(255,255,255,.02));box-shadow:inset 0 0 0 1px rgba(235,246,255,.7), 0 1px 0 rgba(235,246,255,.55)"></div>
<svg class="a" style="left:1258px;top:487px" width="15" height="14" viewBox="0 0 15 14"><path d="M3.7 3.9 L11.3 10.1 M11.3 3.9 L3.7 10.1" stroke="#46566e" stroke-width="4.4" stroke-linecap="round"/><path d="M3.7 3.9 L11.3 10.1 M11.3 3.9 L3.7 10.1" stroke="#fbfbfb" stroke-width="2.7" stroke-linecap="round"/></svg>
<svg class="a" style="left:888px;top:490px" width="17" height="18" viewBox="0 0 17 18"><defs><linearGradient id="tkb" x1="0" x2="1"><stop offset="0" stop-color="#1a3aa8"/><stop offset="1" stop-color="#5a78d0"/></linearGradient></defs><path d="M0.3 3.4 L16.3 1 V13.4 L0.3 14.3Z" fill="#cc1840"/><path d="M0.3 14.3 L10 13.75 V16.2 L0.3 17Z" fill="url(#tkb)"/><g fill="#fff" opacity=".95"><ellipse cx="6" cy="5.3" rx="1.75" ry="1.05"/><ellipse cx="10" cy="4.9" rx="1.75" ry="1.05"/><ellipse cx="3.6" cy="7.6" rx="1.75" ry="1.05"/><ellipse cx="8" cy="7.2" rx="1.75" ry="1.05"/><ellipse cx="12.4" cy="6.8" rx="1.75" ry="1.05"/><ellipse cx="1.6" cy="9.9" rx="1.75" ry="1.05"/><ellipse cx="5.8" cy="9.5" rx="1.75" ry="1.05"/><ellipse cx="10.2" cy="9.1" rx="1.75" ry="1.05"/><ellipse cx="14.4" cy="8.7" rx="1.75" ry="1.05"/><ellipse cx="8" cy="11.6" rx="1.75" ry="1.05"/><ellipse cx="12.2" cy="11.2" rx="1.75" ry="1.05"/><ellipse cx="3.8" cy="12" rx="1.75" ry="1.05"/></g><path d="M3.6 7.6 L8 7.2 L12.4 6.8 M1.6 9.9 L14.4 8.7" stroke="#fff" stroke-width=".5" opacity=".6"/></svg>
<span class="t" style="left:909.0px;top:491.6px;font-size:12px;letter-spacing:0.036px;color:#000;">Обзор эскизов</span>
<div class="a" style="left:887px;top:513px;width:401px;height:294px;background:#f0f0f0;border:1px solid #596a84;box-sizing:border-box;box-shadow:inset 0 0 0 1px #fbfbfb"></div>
<span class="t" style="left:893.7px;top:520.3px;font-size:12px;letter-spacing:-0.213px;color:#000;">Объекты моделей:</span>
<div class="a" style="left:891px;top:543px;width:392px;height:227px;background:#fff;box-sizing:border-box;border:1px solid #e3e3e3;border-top:2px solid #6d6d6d;border-left:2px solid #7a7a7a"></div>
<div class="a" style="left:904px;top:552px;width:9px;height:9px;box-sizing:border-box;border:1px solid #8f8f8f;border-radius:1.5px;background:linear-gradient(135deg,#fff,#d8d8d8)"></div>
<div class="a" style="left:906px;top:556px;width:5px;height:1px;background:#2a2a7a"></div>
<div class="a" style="left:908px;top:554px;width:1px;height:5px;background:#2a2a7a"></div>
<div class="a" style="left:914px;top:556px;width:10px;height:1px;background:repeating-linear-gradient(90deg,#9a9a9a 0 1px,transparent 1px 2px)"></div>
<svg class="a" style="left:926px;top:551px" width="22" height="11" viewBox="0 0 22 11"><path d="M0 5.5 H3" stroke="#777" stroke-width="1"/><path d="M3 5.5 L6.5 2 H9 V9 H6.5Z" fill="#f8f8f8" stroke="#9a9a9a" stroke-width=".8"/><rect x="9" y="2" width="12" height="7" fill="#f0a83c"/><rect x="9" y="2" width="12" height="2.4" fill="#f8cc80"/></svg>
<span class="t" style="left:952.6px;top:549.1px;font-size:12px;letter-spacing:-0.006px;color:#000;">Объекты поперечного сечения</span>
<div class="a" style="left:891px;top:780px;width:64px;height:23px;border:1px solid #707070;border-radius:3px;box-sizing:border-box;background:linear-gradient(#f4f4f4,#ebebeb 48%,#dddddd 52%,#cfcfcf);box-shadow:inset 0 0 0 1px rgba(255,255,255,.85)"></div>
<span class="t" style="left:896.5px;top:785.1px;font-size:12px;letter-spacing:-0.105px;color:#000;">Обновить</span>
<div class="a" style="left:1220px;top:780px;width:64px;height:23px;border:1px solid #707070;border-radius:3px;box-sizing:border-box;background:linear-gradient(#f4f4f4,#ebebeb 48%,#dddddd 52%,#cfcfcf);box-shadow:inset 0 0 0 1px rgba(255,255,255,.85)"></div>
<span class="t" style="left:1229.3px;top:785.1px;font-size:12px;letter-spacing:-0.031px;color:#000;">Закрыть</span>
</div>
</body></html>
